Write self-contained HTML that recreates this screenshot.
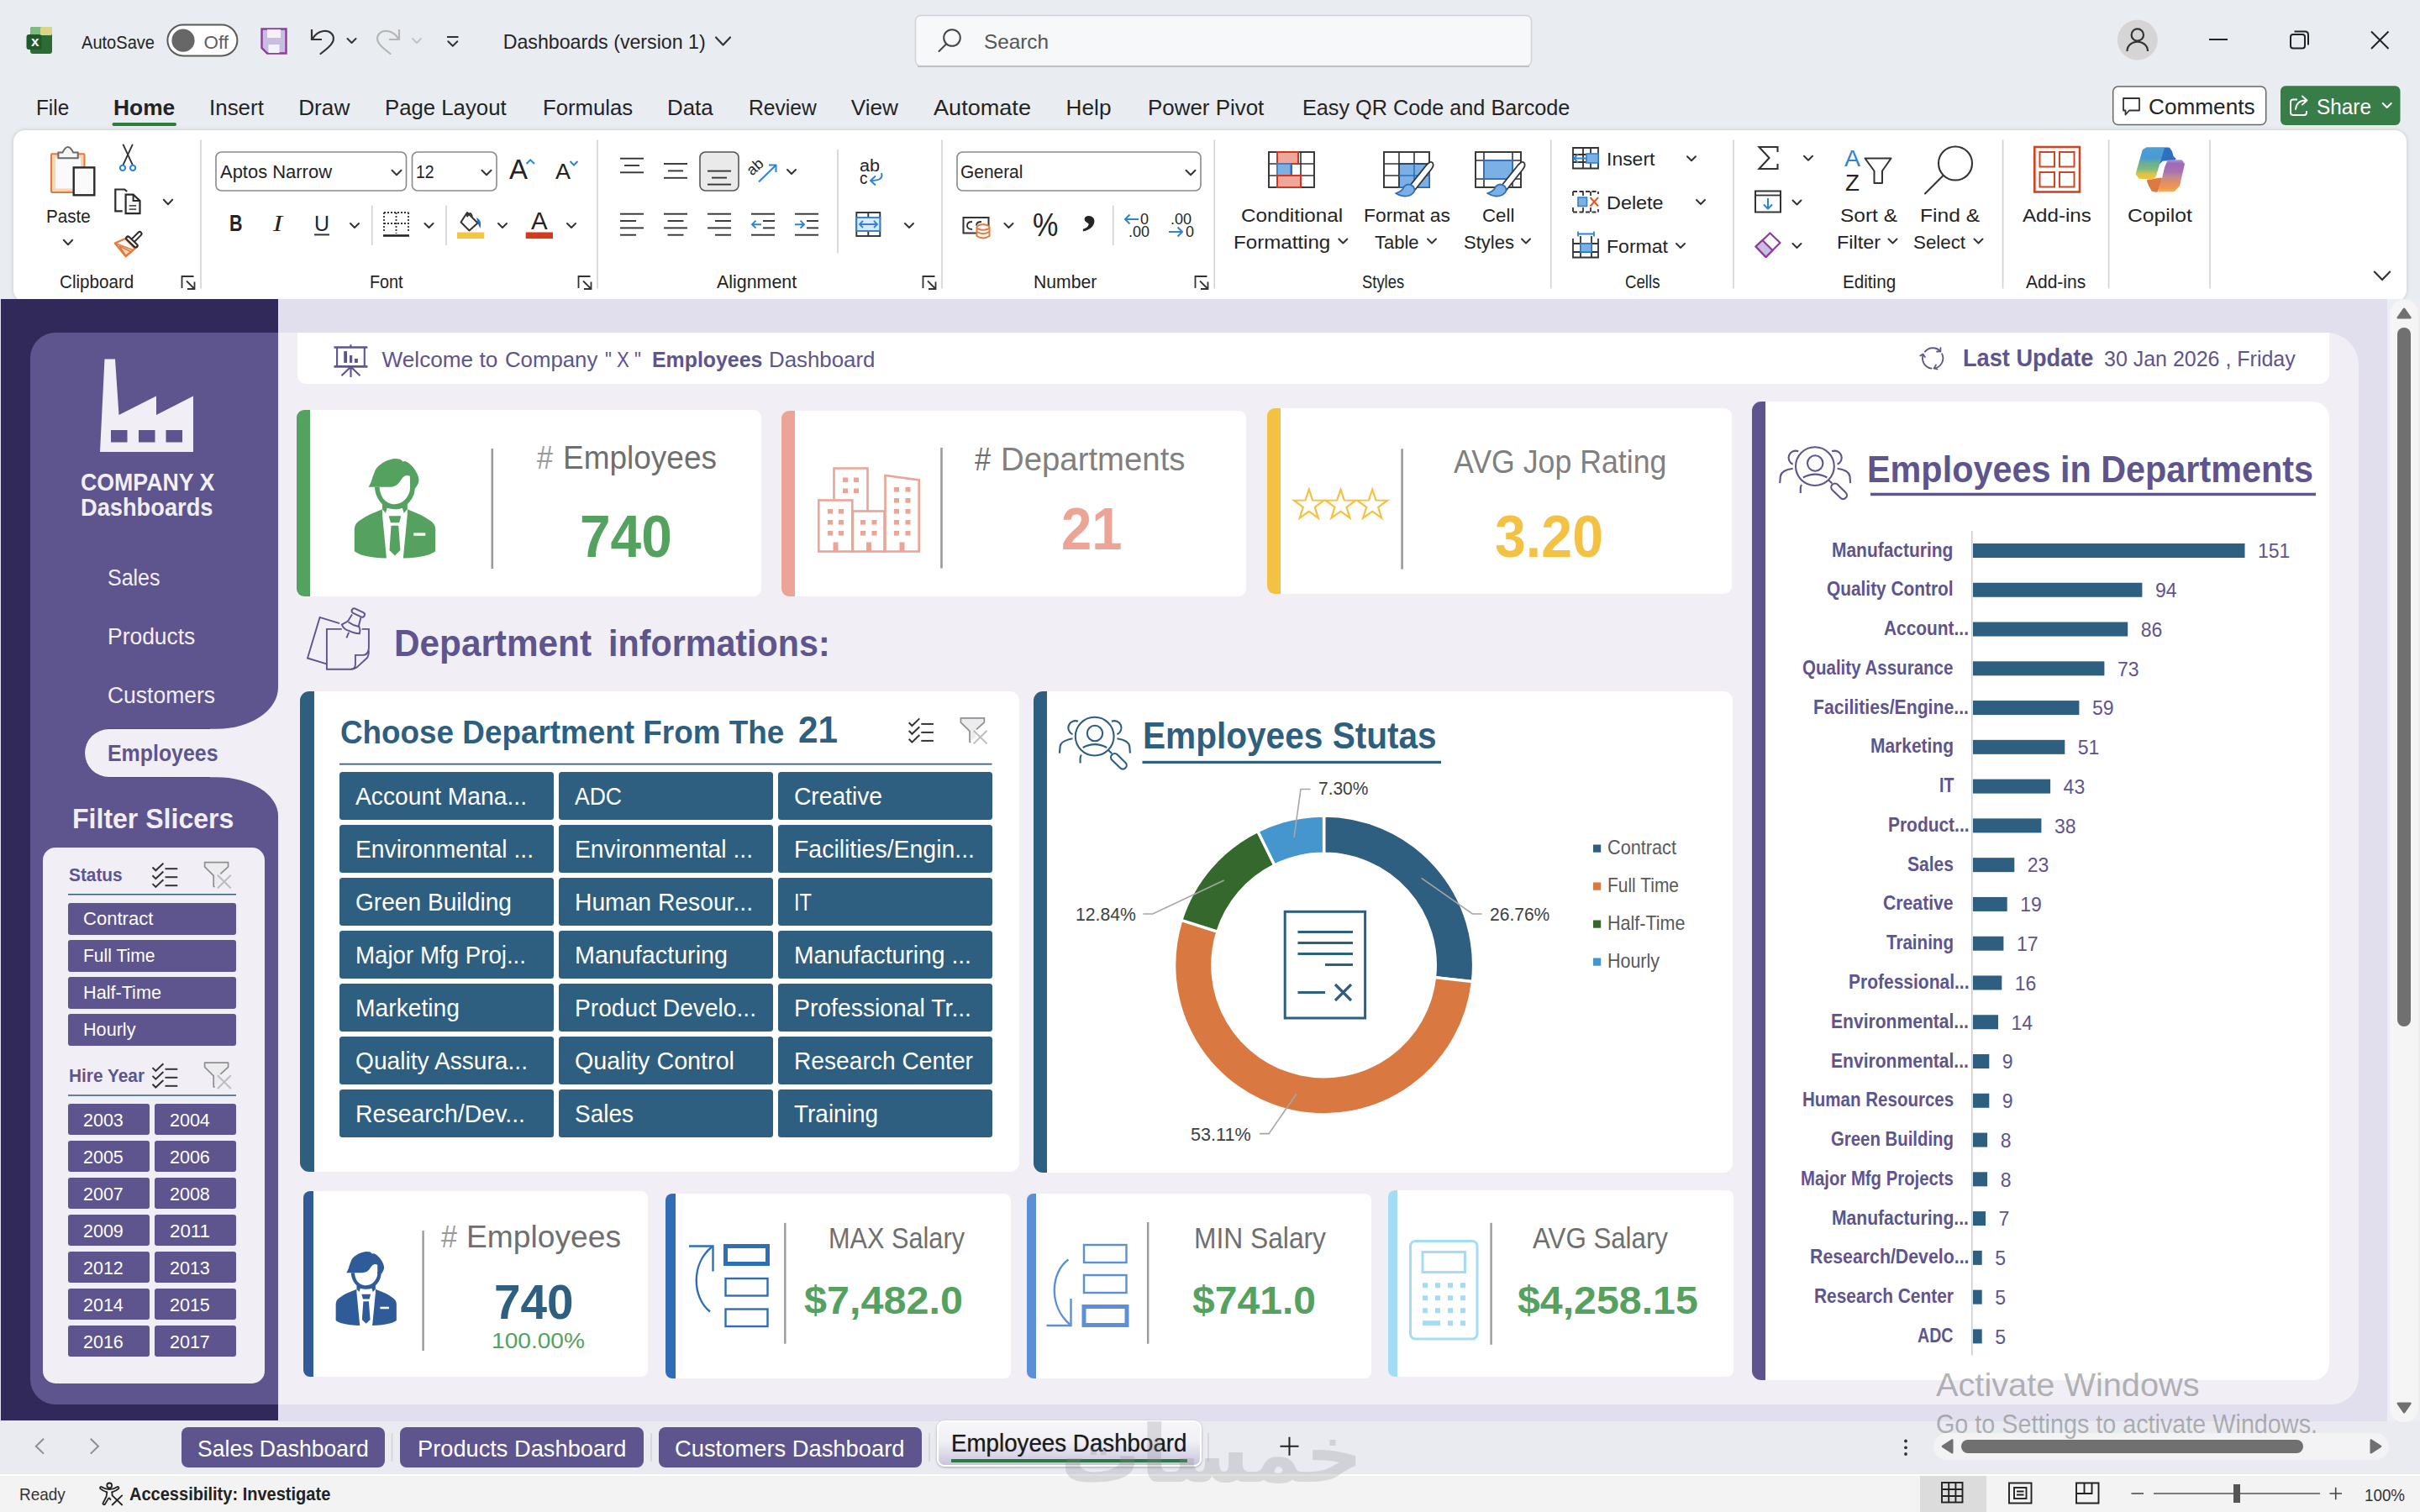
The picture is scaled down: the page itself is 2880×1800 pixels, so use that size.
<!DOCTYPE html>
<html lang="en"><head><meta charset="utf-8"><title>Dashboards (version 1) - Excel</title>
<style>
html,body{margin:0;padding:0}
body{width:2880px;height:1800px;overflow:hidden;position:relative;background:#E9EDF2;
font-family:"Liberation Sans",sans-serif;}
.t{position:absolute;white-space:nowrap;line-height:1;transform-origin:0 0;margin:0;padding:0}
.b{position:absolute;box-sizing:border-box}
.s{position:absolute;left:0;top:0;overflow:visible;pointer-events:none}
</style></head><body>
<svg class="s" width="2880" height="1800" viewBox="0 0 2880 1800" style=""><rect x="36" y="32" width="26" height="32" rx="3" fill="#2E6B34"/><rect x="36" y="32" width="26" height="10" rx="3" fill="#7DBB80"/><rect x="48" y="32" width="14" height="10" rx="2" fill="#D9D58A"/><rect x="31.5" y="41" width="18" height="18" rx="3" fill="#1E5A2B"/><rect x="199.4" y="29.5" width="83" height="37" rx="18.5" fill="#fff" stroke="#5A5A5A" stroke-width="2"/><circle cx="218" cy="48.2" r="13.6" fill="#676767"/><path d="M311.5,34.5 H340.5 V63.5 H318 L311.5,57 Z" fill="#C9BEDF" stroke="#8D3C9C" stroke-width="2.4"/><rect x="318" y="35" width="16" height="10" fill="#F4F1F8"/><rect x="319.5" y="53" width="13" height="10" fill="#F4F1F8"/><path d="M371,35 V47 H383" fill="none" stroke="#333" stroke-width="2.2" stroke-linejoin="miter"/><path d="M372,46 C378,36 392,33 396.5,43 C399,50 392,56 381.5,64" fill="none" stroke="#333" stroke-width="2.2" stroke-linecap="round"/><path d="M413.5,46.0 L418.5,51.0 L423.5,46.0" fill="none" stroke="#333" stroke-width="2" stroke-linecap="round" stroke-linejoin="round"/><path d="M475,35 V47 H463" fill="none" stroke="#B5B5B5" stroke-width="2.2"/><path d="M474,46 C468,36 454,33 449.5,43 C447,50 454,56 464.5,64" fill="none" stroke="#B5B5B5" stroke-width="2.2" stroke-linecap="round"/><path d="M491.0,46.0 L496.0,51.0 L501.0,46.0" fill="none" stroke="#C2C2C2" stroke-width="2" stroke-linecap="round" stroke-linejoin="round"/><path d="M532,44 H545.5" stroke="#333" stroke-width="2"/><path d="M533.3,49.2 L538.8,54.8 L544.3,49.2" fill="none" stroke="#333" stroke-width="2" stroke-linecap="round" stroke-linejoin="round"/><path d="M852.0,44.5 L860.5,53.5 L869.0,44.5" fill="none" stroke="#333" stroke-width="2.2" stroke-linecap="round" stroke-linejoin="round"/><rect x="1089.5" y="18.5" width="733" height="60" rx="6" fill="#F6F8FA" stroke="#CFD2D6" stroke-width="1.5"/><path d="M1092,79.2 H1820" stroke="#B9BCC0" stroke-width="1.6"/><circle cx="1133" cy="45" r="9.8" fill="none" stroke="#444" stroke-width="2"/><path d="M1126,52.5 L1117.5,61" stroke="#444" stroke-width="2" stroke-linecap="round"/><circle cx="2543.8" cy="47.6" r="24" fill="#D5D5D5"/><circle cx="2543.8" cy="41.5" r="7.2" fill="none" stroke="#333" stroke-width="2.2"/><path d="M2531.5,61 C2531.5,46 2556,46 2556,61" fill="none" stroke="#333" stroke-width="2.2"/><path d="M2629,47 H2651" stroke="#222" stroke-width="2"/><rect x="2726" y="41" width="17" height="16.5" rx="3" fill="none" stroke="#222" stroke-width="2"/><path d="M2730.5,37.5 H2743 Q2747,37.5 2747,41.5 V53.5" fill="none" stroke="#222" stroke-width="2"/><path d="M2822,37.5 L2842.5,58 M2842.5,37.5 L2822,58" stroke="#222" stroke-width="2"/><rect x="133.5" y="146" width="76.5" height="4" rx="2" fill="#2B7A3E"/><rect x="2514.7" y="103" width="182" height="45.5" rx="6" fill="#fff" stroke="#666" stroke-width="1.5"/><path d="M2527,117 H2546 V131.5 H2534 L2529.5,136.5 V131.5 H2527 Z" fill="none" stroke="#333" stroke-width="1.8" stroke-linejoin="round"/><rect x="2714" y="102.3" width="142.5" height="46.8" rx="6" fill="#387C48"/><path d="M2734,118.5 H2729 Q2726,118.5 2726,121.5 V134 Q2726,137 2729,137 H2742 Q2745,137 2745,134 V132" fill="none" stroke="#fff" stroke-width="1.9"/><path d="M2732,130 C2733,122 2738,119.5 2744,119.5 M2740,114.5 L2745.5,119.5 L2740,124.5" fill="none" stroke="#fff" stroke-width="1.9" stroke-linejoin="round" stroke-linecap="round"/><path d="M2835.7,123.0 L2840.7,128.0 L2845.7,123.0" fill="none" stroke="#fff" stroke-width="2" stroke-linecap="round" stroke-linejoin="round"/></svg>
<div class="t" style="left:37.20px;top:41.00px;font-size:17.00px;color:#fff;font-weight:700;transform:scaleX(1.0048);">x</div>
<div class="t" style="left:96.70px;top:40.00px;font-size:22.40px;color:#242424;transform:scaleX(0.8956);">AutoSave</div>
<div class="t" style="left:242.50px;top:40.00px;font-size:22.40px;color:#5F5F5F;">Off</div>
<div class="t" style="left:598.70px;top:39.00px;font-size:23.20px;color:#242424;">Dashboards (version 1)</div>
<div class="t" style="left:1171.00px;top:38.00px;font-size:24.00px;color:#555;transform:scaleX(1.0125);">Search</div>
<div class="t" style="left:42.80px;top:115.00px;font-size:26.20px;color:#242424;transform:scaleX(0.9285);">File</div>
<div class="t" style="left:135.00px;top:115.00px;font-size:26.20px;color:#242424;font-weight:700;transform:scaleX(1.0070);">Home</div>
<div class="t" style="left:248.70px;top:115.00px;font-size:26.20px;color:#242424;transform:scaleX(0.9904);">Insert</div>
<div class="t" style="left:355.20px;top:115.00px;font-size:26.20px;color:#242424;">Draw</div>
<div class="t" style="left:458.00px;top:115.00px;font-size:26.20px;color:#242424;transform:scaleX(0.9834);">Page Layout</div>
<div class="t" style="left:645.60px;top:115.00px;font-size:26.20px;color:#242424;transform:scaleX(0.9808);">Formulas</div>
<div class="t" style="left:794.30px;top:115.00px;font-size:26.20px;color:#242424;transform:scaleX(0.9884);">Data</div>
<div class="t" style="left:890.70px;top:115.00px;font-size:26.20px;color:#242424;transform:scaleX(0.9417);">Review</div>
<div class="t" style="left:1012.70px;top:115.00px;font-size:26.20px;color:#242424;">View</div>
<div class="t" style="left:1111.00px;top:115.00px;font-size:26.20px;color:#242424;transform:scaleX(1.0344);">Automate</div>
<div class="t" style="left:1268.60px;top:115.00px;font-size:26.20px;color:#242424;">Help</div>
<div class="t" style="left:1365.60px;top:115.00px;font-size:26.20px;color:#242424;transform:scaleX(0.9900);">Power Pivot</div>
<div class="t" style="left:1550.00px;top:115.00px;font-size:26.20px;color:#242424;transform:scaleX(0.9634);">Easy QR Code and Barcode</div>
<div class="t" style="left:2557.00px;top:114.00px;font-size:26.20px;color:#242424;">Comments</div>
<div class="t" style="left:2756.80px;top:114.00px;font-size:26.20px;color:#fff;transform:scaleX(0.9297);">Share</div>
<div class="b" style="left:15.80px;top:155.30px;width:2848.20px;height:203.50px;background:#fff;border-radius:14px;box-shadow:0 0 5px rgba(0,0,0,.16);"></div>
<svg class="s" width="2880" height="1800" viewBox="0 0 2880 1800" style=""><path d="M239,166.5 V343.5" stroke="#D2D2D2" stroke-width="1.6"/><path d="M711,166.5 V343.5" stroke="#D2D2D2" stroke-width="1.6"/><path d="M1121,166.5 V343.5" stroke="#D2D2D2" stroke-width="1.6"/><path d="M1445.3,166.5 V343.5" stroke="#D2D2D2" stroke-width="1.6"/><path d="M1845.7,166.5 V343.5" stroke="#D2D2D2" stroke-width="1.6"/><path d="M2063,166.5 V343.5" stroke="#D2D2D2" stroke-width="1.6"/><path d="M2383.6,166.5 V343.5" stroke="#D2D2D2" stroke-width="1.6"/><path d="M2509.6,166.5 V343.5" stroke="#D2D2D2" stroke-width="1.6"/><path d="M2630,166.5 V343.5" stroke="#D2D2D2" stroke-width="1.6"/><path d="M997,178 V301.5" stroke="#D2D2D2" stroke-width="1.6"/><path d="M442.7,244.6 V292" stroke="#D2D2D2" stroke-width="1.6"/><path d="M531,244.6 V292" stroke="#D2D2D2" stroke-width="1.6"/><path d="M1324.8,244.6 V292" stroke="#D2D2D2" stroke-width="1.6"/><path d="M216.5,343 V329 H230.5" fill="none" stroke="#333" stroke-width="1.8"/><path d="M222.0,334.5 L231.5,344 M231.5,335.5 V344 H223.0" fill="none" stroke="#333" stroke-width="1.8"/><path d="M688.5,343 V329 H702.5" fill="none" stroke="#333" stroke-width="1.8"/><path d="M694.0,334.5 L703.5,344 M703.5,335.5 V344 H695.0" fill="none" stroke="#333" stroke-width="1.8"/><path d="M1098.5,343 V329 H1112.5" fill="none" stroke="#333" stroke-width="1.8"/><path d="M1104.0,334.5 L1113.5,344 M1113.5,335.5 V344 H1105.0" fill="none" stroke="#333" stroke-width="1.8"/><path d="M1422.5,343 V329 H1436.5" fill="none" stroke="#333" stroke-width="1.8"/><path d="M1428.0,334.5 L1437.5,344 M1437.5,335.5 V344 H1429.0" fill="none" stroke="#333" stroke-width="1.8"/><rect x="61" y="183.2" width="39.5" height="45.8" rx="1" fill="#F8D3B3" stroke="#E07B3E" stroke-width="2"/><rect x="65.9" y="187.8" width="30.2" height="36.7" fill="#FAFAFA"/><path d="M69.4,188.3 V181.4 H74.5 Q80.8,168.5 87.1,181.4 H92.7 V188.3 Z" fill="#F7F7F7" stroke="#6A6A6A" stroke-width="2"/><rect x="87.7" y="199.4" width="24.6" height="32.9" fill="#FAFAFA" stroke="#2B2B2B" stroke-width="2.4"/><path d="M75.8,285.8 L81.0,291.2 L86.2,285.8" fill="none" stroke="#333" stroke-width="2" stroke-linecap="round" stroke-linejoin="round"/><path d="M146.7,172.4 L157.6,195.8 M157.6,172.4 L146.7,195.8" stroke="#333" stroke-width="1.9" stroke-linecap="round"/><circle cx="146" cy="199.9" r="3.1" fill="#fff" stroke="#2F83D0" stroke-width="2.1"/><circle cx="158.1" cy="199.9" r="3.1" fill="#fff" stroke="#2F83D0" stroke-width="2.1"/><path d="M145.7,251.3 H137.3 V225.5 H148.2 L151.2,228" fill="none" stroke="#2B2B2B" stroke-width="2.2"/><path d="M149.6,231.6 H158.6 L166.5,238.9 V254.2 H149.6 Z" fill="#FAFAFA" stroke="#2B2B2B" stroke-width="2.2" stroke-linejoin="miter"/><path d="M158.6,231.6 V238.9 H166.5" fill="none" stroke="#2B2B2B" stroke-width="2"/><path d="M153.7,244.9 H162.1 M153.7,249.1 H162.1" stroke="#555" stroke-width="1.6"/><path d="M194.8,237.8 L200.0,243.2 L205.2,237.8" fill="none" stroke="#333" stroke-width="2" stroke-linecap="round" stroke-linejoin="round"/><path d="M149.2,284 L136.8,289.5 L149.7,305.4 L160.6,296 Z" fill="#FAFAFA" stroke="#E07B3E" stroke-width="2.2" stroke-linejoin="round"/><path d="M142,293 L149.7,304.4 L156,299.5 Z" fill="#F8D3B3" stroke="#E07B3E" stroke-width="1.6" stroke-linejoin="round"/><path d="M138,290 L158,297.5" stroke="#E07B3E" stroke-width="1.6"/><path d="M166.2,278.3 L158.6,286" stroke="#2B2B2B" stroke-width="6.6" stroke-linecap="round"/><path d="M166.2,278.3 L158.6,286" stroke="#FAFAFA" stroke-width="2.6" stroke-linecap="round"/><path d="M152.2,283.6 L161.6,292.5" stroke="#2B2B2B" stroke-width="6.2" stroke-linecap="round"/><path d="M152.4,283.8 L161.4,292.3" stroke="#FAFAFA" stroke-width="2.2" stroke-linecap="round"/><rect x="257" y="181" width="226.5" height="46" rx="6.5" fill="#fff" stroke="#8A8A8A" stroke-width="1.6"/><rect x="490.5" y="181" width="100.5" height="46" rx="6.5" fill="#fff" stroke="#8A8A8A" stroke-width="1.6"/><path d="M466.5,202.8 L472.0,208.2 L477.5,202.8" fill="none" stroke="#333" stroke-width="2" stroke-linecap="round" stroke-linejoin="round"/><path d="M573.5,202.8 L579.0,208.2 L584.5,202.8" fill="none" stroke="#333" stroke-width="2" stroke-linecap="round" stroke-linejoin="round"/><path d="M626.5,195 L631.2,190.3 L636,195" fill="none" stroke="#2F83D0" stroke-width="2"/><path d="M678.5,192 L683,196.5 L687.5,192" fill="none" stroke="#2F83D0" stroke-width="2"/><path d="M374,279.4 H392" stroke="#333" stroke-width="2"/><path d="M417.0,266.0 L422.0,271.0 L427.0,266.0" fill="none" stroke="#333" stroke-width="2" stroke-linecap="round" stroke-linejoin="round"/><path d="M505.5,266.0 L510.5,271.0 L515.5,266.0" fill="none" stroke="#333" stroke-width="2" stroke-linecap="round" stroke-linejoin="round"/><path d="M593.0,266.0 L598.0,271.0 L603.0,266.0" fill="none" stroke="#333" stroke-width="2" stroke-linecap="round" stroke-linejoin="round"/><path d="M675.0,266.0 L680.0,271.0 L685.0,266.0" fill="none" stroke="#333" stroke-width="2" stroke-linecap="round" stroke-linejoin="round"/><path d="M457,253 H486 M457,253 V276 M486,253 V276 M471.5,253 V278 M457,266 H486" stroke="#333" stroke-width="1.8" stroke-dasharray="2 2"/><path d="M456,280.5 H487" stroke="#222" stroke-width="2.6"/><path d="M556,253 L568.5,265.5 L558.5,274.5 L548.5,264.5 Z" fill="#fff" stroke="#333" stroke-width="2" stroke-linejoin="round"/><path d="M556,253 V258 Q560,250 562,258" fill="none" stroke="#333" stroke-width="1.8"/><path d="M567,259 Q574,262 571.5,272 Q568,266 567,259 Z" fill="#1F6FC0"/><rect x="544" y="276.5" width="32.3" height="7.6" fill="#F3C73F"/><rect x="625.7" y="276.5" width="32.3" height="7.6" fill="#D43A1E"/><path d="M738.0,188.7 H766.0" stroke="#333" stroke-width="1.9"/><path d="M743.0,197 H761.0" stroke="#333" stroke-width="1.9"/><path d="M738.0,205.3 H766.0" stroke="#333" stroke-width="1.9"/><path d="M790.0,195 H818.0" stroke="#333" stroke-width="1.9"/><path d="M795.0,203.4 H813.0" stroke="#333" stroke-width="1.9"/><path d="M790.0,211.8 H818.0" stroke="#333" stroke-width="1.9"/><rect x="833" y="181" width="46" height="46" rx="6.5" fill="#EAEAEA" stroke="#555" stroke-width="1.6"/><path d="M842.0,203.6 H870.0" stroke="#333" stroke-width="1.9"/><path d="M847.0,211.6 H865.0" stroke="#333" stroke-width="1.9"/><path d="M842.0,219.6 H870.0" stroke="#333" stroke-width="1.9"/><path d="M903,216.5 L923,197 M915,196.5 H923.5 V205" fill="none" stroke="#2F83D0" stroke-width="2" stroke-linejoin="round"/><path d="M937.0,202.0 L942.0,207.0 L947.0,202.0" fill="none" stroke="#333" stroke-width="2" stroke-linecap="round" stroke-linejoin="round"/><path d="M1049,206 Q1052,215 1037,215 M1042,209.5 L1036,215 L1042,220.5" fill="none" stroke="#2F83D0" stroke-width="2" stroke-linejoin="round"/><path d="M738.0,254.7 H766.0" stroke="#333" stroke-width="1.9"/><path d="M738.0,263 H757.0" stroke="#333" stroke-width="1.9"/><path d="M738.0,271.4 H766.0" stroke="#333" stroke-width="1.9"/><path d="M738.0,279.7 H757.0" stroke="#333" stroke-width="1.9"/><path d="M790.0,254.7 H818.0" stroke="#333" stroke-width="1.9"/><path d="M794.5,263 H813.5" stroke="#333" stroke-width="1.9"/><path d="M790.0,271.4 H818.0" stroke="#333" stroke-width="1.9"/><path d="M794.5,279.7 H813.5" stroke="#333" stroke-width="1.9"/><path d="M842.0,254.7 H870.0" stroke="#333" stroke-width="1.9"/><path d="M851.0,263 H870.0" stroke="#333" stroke-width="1.9"/><path d="M842.0,271.4 H870.0" stroke="#333" stroke-width="1.9"/><path d="M851.0,279.7 H870.0" stroke="#333" stroke-width="1.9"/><path d="M894.0,254.7 H922.0" stroke="#333" stroke-width="1.9"/><path d="M894.0,279.7 H922.0" stroke="#333" stroke-width="1.9"/><path d="M908.0,263 H922.0" stroke="#333" stroke-width="1.9"/><path d="M908.0,271.4 H922.0" stroke="#333" stroke-width="1.9"/><path d="M906,267.2 H895 M899.5,262.7 L895,267.2 L899.5,271.7" fill="none" stroke="#2F83D0" stroke-width="1.9"/><path d="M946.0,254.7 H974.0" stroke="#333" stroke-width="1.9"/><path d="M946.0,279.7 H974.0" stroke="#333" stroke-width="1.9"/><path d="M960.0,263 H974.0" stroke="#333" stroke-width="1.9"/><path d="M960.0,271.4 H974.0" stroke="#333" stroke-width="1.9"/><path d="M946,267.2 H957 M952.5,262.7 L957,267.2 L952.5,271.7" fill="none" stroke="#2F83D0" stroke-width="1.9"/><rect x="1019.3" y="253" width="28" height="28" fill="#fff" stroke="#333" stroke-width="1.9"/><path d="M1033.3,253 V259 M1033.3,275 V281" stroke="#333" stroke-width="1.9"/><rect x="1019.3" y="259" width="28" height="16" fill="#D9E9F8" stroke="#2F83D0" stroke-width="1.9"/><path d="M1023,267 H1044 M1027,263 L1023,267 L1027,271 M1040,263 L1044,267 L1040,271" fill="none" stroke="#2F83D0" stroke-width="1.8"/><path d="M1077.0,266.0 L1082.0,271.0 L1087.0,266.0" fill="none" stroke="#333" stroke-width="2" stroke-linecap="round" stroke-linejoin="round"/><rect x="1139" y="181" width="290" height="46" rx="6.5" fill="#fff" stroke="#8A8A8A" stroke-width="1.6"/><path d="M1411.5,202.8 L1417.0,208.2 L1422.5,202.8" fill="none" stroke="#333" stroke-width="2" stroke-linecap="round" stroke-linejoin="round"/><rect x="1146.5" y="259" width="30" height="18.5" fill="#fff" stroke="#333" stroke-width="2"/><path d="M1157,264 Q1151,264 1151,268.5 Q1151,273 1157,273 M1168,264 Q1162,264 1162,268.5" fill="none" stroke="#333" stroke-width="1.8"/><path d="M1162.5,270.5 V281 Q1170,286 1177.5,281 V270.5" fill="#fff" stroke="#E07B3E" stroke-width="2"/><ellipse cx="1170" cy="270.5" rx="7.5" ry="3.2" fill="#fff" stroke="#E07B3E" stroke-width="2"/><path d="M1162.5,276 Q1170,280.5 1177.5,276" fill="none" stroke="#E07B3E" stroke-width="1.8"/><path d="M1195.5,266.0 L1200.5,271.0 L1205.5,266.0" fill="none" stroke="#333" stroke-width="2" stroke-linecap="round" stroke-linejoin="round"/><path d="M1355,261 H1339 M1344.5,255.5 L1339,261 L1344.5,266.5" fill="none" stroke="#2F83D0" stroke-width="2"/><path d="M1391,276 H1407 M1401.5,270.5 L1407,276 L1401.5,281.5" fill="none" stroke="#2F83D0" stroke-width="2"/><rect x="1510" y="181" width="54" height="42" fill="#fff" stroke="#333" stroke-width="1.9"/><path d="M1510,195 H1564 M1510,209 H1564 M1520,181 V223 M1537,181 V223 M1548,181 V223" stroke="#333" stroke-width="1.6"/><rect x="1520" y="181" width="25" height="14" fill="#F0A79B" stroke="#D3361E" stroke-width="2"/><rect x="1520" y="195" width="16" height="14" fill="#7CB0E4" stroke="#2F83D0" stroke-width="1.6"/><rect x="1520" y="209" width="28" height="14" fill="#F0A79B" stroke="#D3361E" stroke-width="2"/><path d="M1593.3,284.5 L1598.3,289.5 L1603.3,284.5" fill="none" stroke="#333" stroke-width="2" stroke-linecap="round" stroke-linejoin="round"/><rect x="1647" y="181" width="54" height="42" fill="#fff" stroke="#333" stroke-width="1.9"/><rect x="1665" y="195" width="36" height="28" fill="#7CB0E4" stroke="#2F6FBF" stroke-width="1.6"/><path d="M1647,195 H1701 M1647,209 H1665 M1665,181 V223 M1683,181 V195" stroke="#333" stroke-width="1.6"/><path d="M1665,209 H1701 M1683,195 V223" stroke="#2F6FBF" stroke-width="1.6"/><g transform="translate(1647,181)"><path d="M31,40 L51,15 Q56,10 58,13 Q60,16 56,21 L37,45 Z" fill="#fff" stroke="#333" stroke-width="1.8" stroke-linejoin="round"/><path d="M14,49 Q22,47 24,41 Q29,36 35,41 Q39,47 32,51 Q24,55 14,49 Z" fill="#7CB0E4" stroke="#2F6FBF" stroke-width="1.8" stroke-linejoin="round"/></g><path d="M1699.0,284.5 L1704.0,289.5 L1709.0,284.5" fill="none" stroke="#333" stroke-width="2" stroke-linecap="round" stroke-linejoin="round"/><rect x="1756" y="181" width="54" height="42" fill="#fff" stroke="#333" stroke-width="1.9"/><path d="M1756,191 H1810 M1756,213 H1810 M1766,181 V223 M1800,181 V223" stroke="#333" stroke-width="1.6"/><rect x="1766" y="191" width="34" height="22" fill="#7CB0E4" stroke="#2F6FBF" stroke-width="1.8"/><g transform="translate(1756,181)"><path d="M31,40 L51,15 Q56,10 58,13 Q60,16 56,21 L37,45 Z" fill="#fff" stroke="#333" stroke-width="1.8" stroke-linejoin="round"/><path d="M14,49 Q22,47 24,41 Q29,36 35,41 Q39,47 32,51 Q24,55 14,49 Z" fill="#7CB0E4" stroke="#2F6FBF" stroke-width="1.8" stroke-linejoin="round"/></g><path d="M1811.0,284.5 L1816.0,289.5 L1821.0,284.5" fill="none" stroke="#333" stroke-width="2" stroke-linecap="round" stroke-linejoin="round"/><path d="M1872,176 H1902 V200.5 H1872 Z M1872,184 H1902 M1872,193 H1902 M1884,176 V200.5 M1893,176 V200.5" fill="none" stroke="#333" stroke-width="1.8"/><rect x="1888" y="183" width="14" height="11" fill="#7CB0E4" stroke="#2F83D0" stroke-width="1.6"/><path d="M1888,188.5 H1873 M1878,183.5 L1873,188.5 L1878,193.5" fill="none" stroke="#2F83D0" stroke-width="2"/><path d="M2008.0,186.2 L2013.0,191.2 L2018.0,186.2" fill="none" stroke="#333" stroke-width="2" stroke-linecap="round" stroke-linejoin="round"/><path d="M1872,228 H1902 M1872,252.5 H1902 M1872,228 V233 M1872,247 V252.5 M1902,228 V231 M1902,249 V252.5 M1884,228 V233 M1884,247 V252.5 M1893,228 V233 M1893,247 V252.5" fill="none" stroke="#333" stroke-width="1.8" stroke-dasharray="5 2.5"/><rect x="1878" y="235" width="10.5" height="10.5" fill="#7CB0E4" stroke="#2F83D0" stroke-width="1.6"/><path d="M1892.5,235 L1902,245.5 M1902,235 L1892.5,245.5" stroke="#E0572B" stroke-width="2"/><path d="M2019.0,238.0 L2024.0,243.0 L2029.0,238.0" fill="none" stroke="#333" stroke-width="2" stroke-linecap="round" stroke-linejoin="round"/><path d="M1872,284 V306.5 H1902 V284 M1872,290 H1902 M1872,300 H1902 M1881,281 V306.5 M1894,281 V306.5" fill="none" stroke="#333" stroke-width="1.8"/><rect x="1881" y="290" width="13" height="10" fill="#7CB0E4" stroke="#2F83D0" stroke-width="1.6"/><path d="M1878,278.5 H1897 M1878,275.5 V281.5 M1897,275.5 V281.5" stroke="#2F83D0" stroke-width="1.8"/><path d="M1995.0,290.0 L2000.0,295.0 L2005.0,290.0" fill="none" stroke="#333" stroke-width="2" stroke-linecap="round" stroke-linejoin="round"/><path d="M2115.5,181 V175 H2093.5 L2105.5,188 L2093.5,201 H2115.5 V195" fill="none" stroke="#333" stroke-width="2.1" stroke-linejoin="miter"/><path d="M2147.0,185.7 L2152.0,190.7 L2157.0,185.7" fill="none" stroke="#333" stroke-width="2" stroke-linecap="round" stroke-linejoin="round"/><rect x="2089" y="227.5" width="30" height="25" fill="#fff" stroke="#333" stroke-width="2"/><path d="M2089,232.5 H2119" stroke="#333" stroke-width="1.8"/><path d="M2104,236 V248 M2099,243.5 L2104,248.5 L2109,243.5" fill="none" stroke="#2F83D0" stroke-width="2"/><path d="M2133.5,238.5 L2138.5,243.5 L2143.5,238.5" fill="none" stroke="#333" stroke-width="2" stroke-linecap="round" stroke-linejoin="round"/><path d="M2089.5,293.5 L2106.5,277.5 L2118.5,289 L2101.5,306 Z" fill="#fff" stroke="#8D3C9C" stroke-width="2.2" stroke-linejoin="round"/><path d="M2089.5,293.5 L2097.5,286 L2109.5,298 L2101.5,306 Z" fill="#C9BEDF" stroke="#8D3C9C" stroke-width="2.2" stroke-linejoin="round"/><path d="M2133.5,290.0 L2138.5,295.0 L2143.5,290.0" fill="none" stroke="#333" stroke-width="2" stroke-linecap="round" stroke-linejoin="round"/><path d="M2219.5,188.5 H2250.5 L2240,203.5 V218 H2230.5 V203.5 Z" fill="#fff" stroke="#333" stroke-width="2" stroke-linejoin="round"/><path d="M2247.5,284.5 L2252.5,289.5 L2257.5,284.5" fill="none" stroke="#333" stroke-width="2" stroke-linecap="round" stroke-linejoin="round"/><circle cx="2327" cy="194.5" r="20" fill="#fff" stroke="#333" stroke-width="2.1"/><path d="M2312.5,209 L2291,230.5" stroke="#333" stroke-width="2.1" stroke-linecap="round"/><path d="M2349.5,284.5 L2354.5,289.5 L2359.5,284.5" fill="none" stroke="#333" stroke-width="2" stroke-linecap="round" stroke-linejoin="round"/><rect x="2421.3" y="175" width="53.7" height="53.5" fill="#fff" stroke="#D04423" stroke-width="2.6"/><rect x="2427.5" y="181" width="17.5" height="17.5" fill="none" stroke="#D04423" stroke-width="2"/><rect x="2451" y="181" width="17.5" height="17.5" fill="none" stroke="#D04423" stroke-width="2"/><rect x="2427.5" y="205" width="17.5" height="17.5" fill="none" stroke="#D04423" stroke-width="2"/><rect x="2451" y="205" width="17.5" height="17.5" fill="none" stroke="#D04423" stroke-width="2"/><defs><linearGradient id="cp1" x1="0" y1="175" x2="0" y2="214" gradientUnits="userSpaceOnUse"><stop offset="0" stop-color="#4D9DD6"/><stop offset=".34" stop-color="#4A9AD4"/><stop offset=".5" stop-color="#6BAF8C"/><stop offset=".68" stop-color="#7DBB7E"/><stop offset=".82" stop-color="#DCC24A"/><stop offset="1" stop-color="#F9C33A"/></linearGradient><linearGradient id="cp2" x1="0" y1="190" x2="0" y2="229" gradientUnits="userSpaceOnUse"><stop offset="0" stop-color="#A99DCB"/><stop offset=".12" stop-color="#A069B8"/><stop offset=".38" stop-color="#A873B0"/><stop offset=".52" stop-color="#C08A90"/><stop offset=".7" stop-color="#E58D62"/><stop offset=".88" stop-color="#EE9A52"/><stop offset="1" stop-color="#F6BC45"/></linearGradient></defs><g stroke-linejoin="round" stroke-width="3"><path d="M2560.5,214.8 L2571.5,213 L2569.2,220 L2566.5,227.3 L2561.8,226.5 L2558,219.6 L2556.5,215.2 Z" fill="#DC7A44" stroke="#DC7A44"/><path d="M2574.8,177 L2581,177 L2583.5,180.5 L2585.3,186.8 L2588,189.3 L2573.2,190.3 L2569.7,193.8 L2572,184.8 Z" fill="#2F6FBF" stroke="#2F6FBF"/><path d="M2555,176.7 L2574.3,176.7 L2564.4,209.3 L2561.4,212.2 L2546.2,211.2 L2543.2,207 L2551,179.3 Z" fill="url(#cp1)" stroke="url(#cp1)"/><path d="M2580.6,192.1 L2595.8,191.7 L2598.4,195.3 L2592.6,220.6 L2586.8,226.8 L2569.6,227.1 L2574,214.6 L2577.4,199.9 Z" fill="url(#cp2)" stroke="url(#cp2)"/></g><path d="M2825.8,323.6 L2835.0,333.1 L2844.2,323.6" fill="none" stroke="#333" stroke-width="2.2" stroke-linecap="round" stroke-linejoin="round"/></svg>
<div class="t" style="left:55.00px;top:247.00px;font-size:22.50px;color:#242424;transform:scaleX(0.9159);">Paste</div>
<div class="t" style="left:71.40px;top:325.00px;font-size:21.20px;color:#242424;transform:scaleX(0.9741);">Clipboard</div>
<div class="t" style="left:261.80px;top:194.00px;font-size:22.50px;color:#242424;transform:scaleX(0.9758);">Aptos Narrow</div>
<div class="t" style="left:495.40px;top:194.00px;font-size:22.50px;color:#242424;transform:scaleX(0.8630);">12</div>
<div class="t" style="left:606.00px;top:184.00px;font-size:34.00px;color:#242424;transform:scaleX(0.9701);">A</div>
<div class="t" style="left:661.00px;top:191.00px;font-size:26.00px;color:#242424;transform:scaleX(1.0379);">A</div>
<div class="t" style="left:273.00px;top:253.00px;font-size:27.00px;color:#242424;font-weight:700;transform:scaleX(0.7949);">B</div>
<div class="t" style="left:325.00px;top:252.00px;font-size:28.00px;color:#242424;font-style:italic;font-family:'Liberation Serif',serif;transform:scaleX(1.1796);">I</div>
<div class="t" style="left:374.00px;top:253.00px;font-size:26.50px;color:#242424;transform:scaleX(0.9405);">U</div>
<div class="t" style="left:632.00px;top:249.00px;font-size:29.00px;color:#242424;transform:scaleX(1.0132);">A</div>
<div class="t" style="left:440.00px;top:325.00px;font-size:21.20px;color:#242424;transform:scaleX(0.9335);">Font</div>
<div class="t" style="left:897.00px;top:194.00px;font-size:18.00px;color:#242424;transform:scaleX(0.8491);transform-origin:0 100%;transform:rotate(-42deg);">ab</div>
<div class="t" style="left:1023.00px;top:188.00px;font-size:19.50px;color:#242424;transform:scaleX(1.1065);">ab</div>
<div class="t" style="left:1023.00px;top:203.00px;font-size:19.50px;color:#242424;transform:scaleX(0.9744);">c</div>
<div class="t" style="left:852.60px;top:325.00px;font-size:21.20px;color:#242424;transform:scaleX(1.0098);">Alignment</div>
<div class="t" style="left:1143.30px;top:194.00px;font-size:22.50px;color:#242424;transform:scaleX(0.9294);">General</div>
<div class="t" style="left:1229.00px;top:249.00px;font-size:38.50px;color:#242424;transform:scaleX(0.8881);">%</div>
<div class="t" style="left:1288.00px;top:214.00px;font-size:62.00px;color:#242424;font-weight:700;font-family:'Liberation Serif',serif;transform:scaleX(1.0968);">,</div>
<div class="t" style="left:1357.00px;top:253.00px;font-size:17.50px;color:#242424;transform:scaleX(1.0274);">0</div>
<div class="t" style="left:1343.00px;top:268.00px;font-size:17.50px;color:#242424;transform:scaleX(1.0276);">.00</div>
<div class="t" style="left:1393.00px;top:253.00px;font-size:17.50px;color:#242424;transform:scaleX(1.0276);">.00</div>
<div class="t" style="left:1411.00px;top:268.00px;font-size:17.50px;color:#242424;transform:scaleX(1.0274);">0</div>
<div class="t" style="left:1230.00px;top:325.00px;font-size:21.20px;color:#242424;">Number</div>
<div class="t" style="left:1476.80px;top:246.00px;font-size:22.50px;color:#242424;transform:scaleX(1.0757);">Conditional</div>
<div class="t" style="left:1467.80px;top:278.00px;font-size:22.50px;color:#242424;transform:scaleX(1.0713);">Formatting</div>
<div class="t" style="left:1623.00px;top:246.00px;font-size:22.50px;color:#242424;transform:scaleX(1.0151);">Format as</div>
<div class="t" style="left:1636.00px;top:278.00px;font-size:22.50px;color:#242424;transform:scaleX(0.9779);">Table</div>
<div class="t" style="left:1763.60px;top:246.00px;font-size:22.50px;color:#242424;transform:scaleX(0.9907);">Cell</div>
<div class="t" style="left:1741.60px;top:278.00px;font-size:22.50px;color:#242424;transform:scaleX(0.9792);">Styles</div>
<div class="t" style="left:1620.80px;top:325.00px;font-size:21.20px;color:#242424;transform:scaleX(0.8695);">Styles</div>
<div class="t" style="left:1912.40px;top:179.00px;font-size:22.50px;color:#242424;transform:scaleX(1.0200);">Insert</div>
<div class="t" style="left:1912.40px;top:231.00px;font-size:22.50px;color:#242424;transform:scaleX(1.0393);">Delete</div>
<div class="t" style="left:1912.40px;top:283.00px;font-size:22.50px;color:#242424;transform:scaleX(1.0244);">Format</div>
<div class="t" style="left:1933.50px;top:325.00px;font-size:21.20px;color:#242424;transform:scaleX(0.8807);">Cells</div>
<div class="t" style="left:2195.00px;top:175.00px;font-size:28.00px;color:#2F83D0;transform:scaleX(1.0173);">A</div>
<div class="t" style="left:2195.50px;top:204.00px;font-size:28.00px;color:#242424;transform:scaleX(0.9939);">Z</div>
<div class="t" style="left:2190.00px;top:246.00px;font-size:22.50px;color:#242424;transform:scaleX(1.0876);">Sort &amp;</div>
<div class="t" style="left:2185.80px;top:278.00px;font-size:22.50px;color:#242424;transform:scaleX(1.0400);">Filter</div>
<div class="t" style="left:2284.70px;top:246.00px;font-size:22.50px;color:#242424;transform:scaleX(1.0949);">Find &amp;</div>
<div class="t" style="left:2277.00px;top:278.00px;font-size:22.50px;color:#242424;transform:scaleX(0.9914);">Select</div>
<div class="t" style="left:2192.70px;top:325.00px;font-size:21.20px;color:#242424;transform:scaleX(0.9749);">Editing</div>
<div class="t" style="left:2407.00px;top:246.00px;font-size:22.50px;color:#242424;transform:scaleX(1.0722);">Add-ins</div>
<div class="t" style="left:2411.40px;top:325.00px;font-size:21.20px;color:#242424;transform:scaleX(0.9905);">Add-ins</div>
<div class="t" style="left:2532.20px;top:246.00px;font-size:22.50px;color:#242424;transform:scaleX(1.0965);">Copilot</div>
<div class="b" style="left:0.00px;top:356.30px;width:2880.00px;height:1335.70px;background:#E1DFEE;"></div>
<div class="b" style="left:1.10px;top:356.30px;width:329.70px;height:1335.20px;background:#30295A;"></div>
<div class="b" style="left:331.00px;top:396.00px;width:2476.00px;height:1276.00px;background:#F1EFF5;border-radius:0 38px 33px 0;"></div>
<div class="b" style="left:2840.80px;top:356.30px;width:39.20px;height:1335.70px;background:#EBEEF2;"></div>
<svg class="s" width="2880" height="1800" viewBox="0 0 2880 1800" style=""><rect x="250" y="812" width="81.5" height="170" fill="#F1EFF5"/><path d="M66,396 H331 V818.5 A73,49.3 0 0 1 258,867.8 H129.5 A28.7,28.7 0 0 0 129.5,925.2 H258 A73,46 0 0 1 331,971 V1672 H66 A30,30 0 0 1 36,1642 V426 A30,30 0 0 1 66,396 Z" fill="#5E548E"/><path d="M129.5,868 H331 V925 H129.5 A28.5,28.5 0 0 1 129.5,868 Z" fill="#F1EFF5"/><path d="M119,538 L124.5,427.5 H137 L141.5,494 L186,471.5 V494 L230,471.5 V538 Z" fill="#F1EFF5"/><rect x="132" y="512" width="19.5" height="14.5" fill="#5E548E"/><rect x="165" y="512" width="19.5" height="14.5" fill="#5E548E"/><rect x="197.5" y="512" width="19.5" height="14.5" fill="#5E548E"/></svg>
<div class="t" style="left:95.50px;top:560.00px;font-size:29.20px;color:#F1EFF5;font-weight:700;transform:scaleX(0.9159);">COMPANY X</div>
<div class="t" style="left:95.50px;top:590.00px;font-size:29.20px;color:#F1EFF5;font-weight:700;transform:scaleX(0.9333);">Dashboards</div>
<div class="t" style="left:127.70px;top:675.00px;font-size:27.00px;color:#F1EFF5;transform:scaleX(0.9253);">Sales</div>
<div class="t" style="left:127.70px;top:745.00px;font-size:27.00px;color:#F1EFF5;transform:scaleX(0.9789);">Products</div>
<div class="t" style="left:127.70px;top:815.00px;font-size:27.00px;color:#F1EFF5;transform:scaleX(0.9806);">Customers</div>
<div class="t" style="left:128.00px;top:884.00px;font-size:27.00px;color:#5E548E;font-weight:700;transform:scaleX(0.9224);">Employees</div>
<div class="t" style="left:86.20px;top:958.00px;font-size:33.40px;color:#F1EFF5;font-weight:700;transform:scaleX(0.9596);">Filter Slicers</div>
<div class="b" style="left:51.20px;top:1009.00px;width:264.20px;height:638.00px;background:#F1EFF5;border-radius:15px;"></div>
<svg class="s" width="2880" height="1800" viewBox="0 0 2880 1800" style=""><path d="M181.5,1032.5 l3.8,3.8 l9.1,-8.6" fill="none" stroke="#333" stroke-width="2"/><path d="M196.5,1034.2 H211.3" stroke="#333" stroke-width="2"/><path d="M181.5,1042.3 l3.8,3.8 l9.1,-8.6" fill="none" stroke="#333" stroke-width="2"/><path d="M196.5,1044.2 H211.3" stroke="#333" stroke-width="2"/><path d="M181.5,1052.1 l3.8,3.8 l9.1,-8.6" fill="none" stroke="#333" stroke-width="2"/><path d="M196.5,1054.2 H211.3" stroke="#333" stroke-width="2"/><path d="M243.6,1026.7 H271.6 V1031.8 L261.1,1042.1 V1049.8 L254.2,1055.3 V1042.3 L243.6,1031.9 Z" fill="#ECECEE"/><path d="M262.3,1040.3 L271.6,1031.8 V1026.7 H243.6 V1031.9 L254.2,1042.3 V1055.0 L255.5,1056.0" fill="none" stroke="#8E8E8E" stroke-width="1.7" stroke-linejoin="round"/><path d="M258.9,1041.8 L274.8,1057.5 M274.8,1041.8 L258.9,1057.5" stroke="#BDBDBD" stroke-width="2"/><path d="M181.5,1271.1 l3.8,3.8 l9.1,-8.6" fill="none" stroke="#333" stroke-width="2"/><path d="M196.5,1272.8 H211.3" stroke="#333" stroke-width="2"/><path d="M181.5,1280.9 l3.8,3.8 l9.1,-8.6" fill="none" stroke="#333" stroke-width="2"/><path d="M196.5,1282.8 H211.3" stroke="#333" stroke-width="2"/><path d="M181.5,1290.7 l3.8,3.8 l9.1,-8.6" fill="none" stroke="#333" stroke-width="2"/><path d="M196.5,1292.8 H211.3" stroke="#333" stroke-width="2"/><path d="M243.6,1265.2 H271.6 V1270.3 L261.1,1280.6 V1288.3 L254.2,1293.8 V1280.8 L243.6,1270.4 Z" fill="#ECECEE"/><path d="M262.3,1278.8 L271.6,1270.3 V1265.2 H243.6 V1270.4 L254.2,1280.8 V1293.5 L255.5,1294.5" fill="none" stroke="#8E8E8E" stroke-width="1.7" stroke-linejoin="round"/><path d="M258.9,1280.3 L274.8,1296.0 M274.8,1280.3 L258.9,1296.0" stroke="#BDBDBD" stroke-width="2"/><path d="M81,1064.8 H281 M81,1304 H281" stroke="#2E5F80" stroke-width="1.4"/></svg>
<div class="t" style="left:81.50px;top:1031.00px;font-size:22.30px;color:#5E548E;font-weight:700;transform:scaleX(0.9346);">Status</div>
<div class="t" style="left:81.50px;top:1270.00px;font-size:22.30px;color:#5E548E;font-weight:700;transform:scaleX(0.9346);">Hire Year</div>
<div class="b" style="left:81.00px;top:1075.00px;width:200.00px;height:37.50px;background:#5E548E;border-radius:3px;"></div>
<div class="t" style="left:99.40px;top:1083.00px;font-size:22.30px;color:#fff;transform:scaleX(0.9884);">Contract</div>
<div class="b" style="left:81.00px;top:1119.00px;width:200.00px;height:37.50px;background:#5E548E;border-radius:3px;"></div>
<div class="t" style="left:99.40px;top:1127.00px;font-size:22.30px;color:#fff;transform:scaleX(0.9452);">Full Time</div>
<div class="b" style="left:81.00px;top:1163.00px;width:200.00px;height:37.50px;background:#5E548E;border-radius:3px;"></div>
<div class="t" style="left:99.40px;top:1171.00px;font-size:22.30px;color:#fff;transform:scaleX(0.9706);">Half-Time</div>
<div class="b" style="left:81.00px;top:1207.00px;width:200.00px;height:37.50px;background:#5E548E;border-radius:3px;"></div>
<div class="t" style="left:99.40px;top:1215.00px;font-size:22.30px;color:#fff;transform:scaleX(0.9699);">Hourly</div>
<div class="b" style="left:81.00px;top:1314.20px;width:96.50px;height:37.30px;background:#5E548E;border-radius:3px;"></div>
<div class="t" style="left:99.00px;top:1324.00px;font-size:21.50px;color:#fff;">2003</div>
<div class="b" style="left:184.00px;top:1314.20px;width:97.00px;height:37.30px;background:#5E548E;border-radius:3px;"></div>
<div class="t" style="left:202.00px;top:1324.00px;font-size:21.50px;color:#fff;">2004</div>
<div class="b" style="left:81.00px;top:1358.20px;width:96.50px;height:37.30px;background:#5E548E;border-radius:3px;"></div>
<div class="t" style="left:99.00px;top:1368.00px;font-size:21.50px;color:#fff;">2005</div>
<div class="b" style="left:184.00px;top:1358.20px;width:97.00px;height:37.30px;background:#5E548E;border-radius:3px;"></div>
<div class="t" style="left:202.00px;top:1368.00px;font-size:21.50px;color:#fff;">2006</div>
<div class="b" style="left:81.00px;top:1402.20px;width:96.50px;height:37.30px;background:#5E548E;border-radius:3px;"></div>
<div class="t" style="left:99.00px;top:1412.00px;font-size:21.50px;color:#fff;">2007</div>
<div class="b" style="left:184.00px;top:1402.20px;width:97.00px;height:37.30px;background:#5E548E;border-radius:3px;"></div>
<div class="t" style="left:202.00px;top:1412.00px;font-size:21.50px;color:#fff;">2008</div>
<div class="b" style="left:81.00px;top:1446.20px;width:96.50px;height:37.30px;background:#5E548E;border-radius:3px;"></div>
<div class="t" style="left:99.00px;top:1456.00px;font-size:21.50px;color:#fff;">2009</div>
<div class="b" style="left:184.00px;top:1446.20px;width:97.00px;height:37.30px;background:#5E548E;border-radius:3px;"></div>
<div class="t" style="left:202.00px;top:1456.00px;font-size:21.50px;color:#fff;transform:scaleX(1.0382);">2011</div>
<div class="b" style="left:81.00px;top:1490.20px;width:96.50px;height:37.30px;background:#5E548E;border-radius:3px;"></div>
<div class="t" style="left:99.00px;top:1500.00px;font-size:21.50px;color:#fff;">2012</div>
<div class="b" style="left:184.00px;top:1490.20px;width:97.00px;height:37.30px;background:#5E548E;border-radius:3px;"></div>
<div class="t" style="left:202.00px;top:1500.00px;font-size:21.50px;color:#fff;">2013</div>
<div class="b" style="left:81.00px;top:1534.20px;width:96.50px;height:37.30px;background:#5E548E;border-radius:3px;"></div>
<div class="t" style="left:99.00px;top:1544.00px;font-size:21.50px;color:#fff;">2014</div>
<div class="b" style="left:184.00px;top:1534.20px;width:97.00px;height:37.30px;background:#5E548E;border-radius:3px;"></div>
<div class="t" style="left:202.00px;top:1544.00px;font-size:21.50px;color:#fff;">2015</div>
<div class="b" style="left:81.00px;top:1578.20px;width:96.50px;height:37.30px;background:#5E548E;border-radius:3px;"></div>
<div class="t" style="left:99.00px;top:1588.00px;font-size:21.50px;color:#fff;">2016</div>
<div class="b" style="left:184.00px;top:1578.20px;width:97.00px;height:37.30px;background:#5E548E;border-radius:3px;"></div>
<div class="t" style="left:202.00px;top:1588.00px;font-size:21.50px;color:#fff;">2017</div>
<div class="b" style="left:353.50px;top:396.00px;width:2418.50px;height:60.80px;background:#fff;border-radius:0 0 12px 10px;"></div>
<svg class="s" width="2880" height="1800" viewBox="0 0 2880 1800" style=""><g fill="none" stroke="#5E548E"><path d="M397.5,413.5 H437.4 M397.5,436.4 H437.4" stroke-width="2.7"/><path d="M401.1,413.5 V436.4 M433.8,413.5 V436.4 M417.4,410.2 V413 M417.5,437 V449 M416.6,437.4 L406.4,447.2 M418.4,437.4 L428.5,447.2" stroke-width="2.1"/></g><rect x="409.2" y="418.1" width="3.8" height="13.8" fill="#5E548E"/><rect x="416" y="423" width="3.2" height="8.9" fill="#5E548E"/><rect x="421.9" y="427" width="4" height="4.9" fill="#5E548E"/><g fill="none" stroke="#5E548E" stroke-width="1.8" stroke-linecap="round" stroke-linejoin="round"><path d="M2290.9,418.6 A12.2,12.2 0 0 1 2309.3,418.3 M2311.2,421.3 A12.2,12.2 0 0 1 2302.1,438.5 M2298.6,438.6 A12.2,12.2 0 0 1 2288.8,422.0"/><path d="M2309.5,414.2 L2309.3,418.4 L2305.1,418.5 M2304,434.4 L2301.6,438.4 L2305.5,439.5 M2285.3,423.6 L2288.4,421.5 L2290.9,425.1"/></g></svg>
<div class="t" style="left:454.50px;top:415.00px;font-size:26.20px;color:#5E548E;">Welcome to</div>
<div class="t" style="left:601.40px;top:415.00px;font-size:26.20px;color:#5E548E;transform:scaleX(0.9845);">Company</div>
<div class="t" style="left:719.50px;top:415.00px;font-size:26.20px;color:#5E548E;transform:scaleX(0.8492);">&quot; X &quot;</div>
<div class="t" style="left:776.00px;top:415.00px;font-size:26.20px;color:#5E548E;font-weight:700;transform:scaleX(0.9498);">Employees</div>
<div class="t" style="left:915.30px;top:415.00px;font-size:26.20px;color:#5E548E;transform:scaleX(0.9869);">Dashboard</div>
<div class="t" style="left:2335.50px;top:411.00px;font-size:29.80px;color:#5E548E;font-weight:700;transform:scaleX(0.9117);">Last Update</div>
<div class="t" style="left:2503.60px;top:414.00px;font-size:26.40px;color:#5E548E;transform:scaleX(0.9465);">30 Jan 2026 , Friday</div>
<div class="b" style="left:353.00px;top:488.30px;width:552.80px;height:221.40px;background:#fff;border-radius:9px;"></div>
<div class="b" style="left:353.00px;top:488.30px;width:16.00px;height:221.40px;background:#55A15F;border-radius:9px 0 0 9px;"></div>
<div class="b" style="left:930.30px;top:488.50px;width:553.00px;height:221.20px;background:#fff;border-radius:9px;"></div>
<div class="b" style="left:930.30px;top:488.50px;width:16.00px;height:221.20px;background:#EBA496;border-radius:9px 0 0 9px;"></div>
<div class="b" style="left:1508.00px;top:485.90px;width:553.00px;height:221.00px;background:#fff;border-radius:9px;"></div>
<div class="b" style="left:1508.00px;top:485.90px;width:16.00px;height:221.00px;background:#F3C144;border-radius:9px 0 0 9px;"></div>
<svg class="s" width="2880" height="1800" viewBox="0 0 2880 1800" style=""><path d="M585.8,534 V677" stroke="#9B9B9B" stroke-width="2.6"/><path d="M1120.5,533 V676.5" stroke="#9B9B9B" stroke-width="2.6"/><path d="M1668.6,534.3 V677.6" stroke="#9B9B9B" stroke-width="2.6"/><g transform="translate(421.6,546) scale(1.0041,1.0034)" fill="#55A15F"><path d="M16.9,33.7 C19.5,30 20.8,25.5 21.8,21.8 L24.8,13.9 C26.5,10.5 28.8,8.2 31.7,6.4 C34.8,4 38,2.5 41.7,1.5 C43.7,0.7 45.6,0.2 47.6,0 L53.6,0.5 C55.2,1 56.5,2.2 57.5,3.5 L60.5,3 C63.2,4 65.6,5.8 67.5,7.9 C70,10.2 72,13 73.4,15.9 C75,18.5 76,21 76.4,23.8 C76.7,25.5 76.5,27.3 75.9,28.8 C75.3,30.6 74.4,32.3 73.4,33.7 L71.9,35.7 L66.3,36 L66,20.8 C64.6,20.2 63,19.9 61.5,20 C59.9,20.4 58.6,21.2 57.5,22.3 C56,24 54.8,26 53.6,27.8 C52.2,29.6 50.6,31.2 48.6,32.2 C46.5,33.3 44.1,33.7 41.7,33.7 Z"/><path d="M24.3,33.7 L30,33.7 C30,35.7 30.3,37.7 30.8,39.7 C31.4,42.2 32.4,44.5 33.7,46.6 C35.2,48.8 37.3,50.7 39.7,52 C42.1,53.3 44.8,54 47.6,54 C50.8,53.8 53.9,53 56.5,51.6 C58.9,50.1 61,48 62.5,45.6 C63.9,43.8 64.9,41.8 65.5,39.7 C66.1,37.1 66.3,34.4 66.3,31.7 L71.9,35.7 C71.7,37.7 71.4,39.7 70.9,41.7 C70.2,44.2 69,46.5 67.5,48.6 C66.2,50.6 64.7,52.4 63,54 L63,60 L58.8,64.5 L57,58.5 C54,59.6 50.8,60.1 47.6,60 C44.7,59.9 41.7,59.4 38.9,58.5 L37.3,64.5 L33.2,60 L33.2,54 C31.5,52.4 30,50.6 28.8,48.6 C27.2,46.2 26,43.5 25.3,40.7 C24.7,38.4 24.4,36 24.3,33.7 Z"/><path d="M33.2,60 L33.2,66 L38.2,118 C33,118 27.8,117.7 22.8,117 C17.7,116.4 12.7,115.4 7.9,114 C5.2,113 2.6,111.7 0.2,110 L0.2,83.3 C0.4,81.2 1,79.2 2,77.4 C3.5,75.4 5.5,73.7 7.9,72.4 C11.1,70.2 14.4,68.2 17.9,66.5 Z"/><path d="M63,60 L63,66 L58,118 C63.2,118 68.4,117.7 73.4,117 C78.5,116.4 83.5,115.4 88.3,114 C91,113 93.8,111.7 96.2,110 L96.2,83.3 C96,81.2 95.4,79.2 94.2,77.4 C92.7,75.4 90.7,73.7 88.3,72.4 C85.1,70.2 81.8,68.2 78.4,66.5 Z"/><path d="M40.9,68 L55.4,68 L53.3,75.9 L43.2,75.9 Z"/><path d="M43.7,79.4 L52.4,79.4 L54.6,108.6 L48.1,115 L41.7,108.6 Z"/><rect x="70.4" y="88.1" width="13.9" height="3.4" fill="#fff"/></g><g fill="none" stroke="#EBA496" stroke-width="2.6"><path d="M992.5,594 V557.5 H1032.5 V608"/><rect x="974.3" y="595.5" width="40" height="61"/><rect x="1015" y="608.5" width="37.5" height="48"/><path d="M1053.5,656.5 V566 L1093.7,571.5 V656.5 Z"/></g><rect x="1003.0" y="568.5" width="6" height="5.6" fill="#EBA496"/><rect x="1003.0" y="581.5" width="6" height="5.6" fill="#EBA496"/><rect x="1016.0" y="568.5" width="6" height="5.6" fill="#EBA496"/><rect x="1016.0" y="581.5" width="6" height="5.6" fill="#EBA496"/><rect x="985.0" y="606.0" width="6" height="5.6" fill="#EBA496"/><rect x="985.0" y="619.0" width="6" height="5.6" fill="#EBA496"/><rect x="985.0" y="632.0" width="6" height="5.6" fill="#EBA496"/><rect x="998.0" y="606.0" width="6" height="5.6" fill="#EBA496"/><rect x="998.0" y="619.0" width="6" height="5.6" fill="#EBA496"/><rect x="998.0" y="632.0" width="6" height="5.6" fill="#EBA496"/><rect x="1024.0" y="619.0" width="6" height="5.6" fill="#EBA496"/><rect x="1024.0" y="632.0" width="6" height="5.6" fill="#EBA496"/><rect x="1037.5" y="619.0" width="6" height="5.6" fill="#EBA496"/><rect x="1037.5" y="632.0" width="6" height="5.6" fill="#EBA496"/><rect x="1064.0" y="580.0" width="6" height="5.6" fill="#EBA496"/><rect x="1064.0" y="593.0" width="6" height="5.6" fill="#EBA496"/><rect x="1064.0" y="606.0" width="6" height="5.6" fill="#EBA496"/><rect x="1064.0" y="619.0" width="6" height="5.6" fill="#EBA496"/><rect x="1064.0" y="632.0" width="6" height="5.6" fill="#EBA496"/><rect x="1077.5" y="580.0" width="6" height="5.6" fill="#EBA496"/><rect x="1077.5" y="593.0" width="6" height="5.6" fill="#EBA496"/><rect x="1077.5" y="606.0" width="6" height="5.6" fill="#EBA496"/><rect x="1077.5" y="619.0" width="6" height="5.6" fill="#EBA496"/><rect x="1077.5" y="632.0" width="6" height="5.6" fill="#EBA496"/><rect x="991.5" y="645.5" width="6" height="11" fill="#EBA496"/><rect x="1031" y="645.5" width="6" height="11" fill="#EBA496"/><rect x="1070.5" y="645.5" width="6" height="11" fill="#EBA496"/><polygon points="1557.8,582.7 1562.1,595.5 1575.7,595.7 1564.8,603.8 1568.9,616.7 1557.8,608.9 1546.7,616.7 1550.8,603.8 1539.9,595.7 1553.5,595.5" fill="#fff" stroke="#F3C144" stroke-width="2.2" stroke-linejoin="miter"/><polygon points="1595.5,582.7 1599.8,595.5 1613.4,595.7 1602.5,603.8 1606.6,616.7 1595.5,608.9 1584.4,616.7 1588.5,603.8 1577.6,595.7 1591.2,595.5" fill="#fff" stroke="#F3C144" stroke-width="2.2" stroke-linejoin="miter"/><polygon points="1633.2,582.7 1637.5,595.5 1651.1,595.7 1640.2,603.8 1644.3,616.7 1633.2,608.9 1622.1,616.7 1626.2,603.8 1615.3,595.7 1628.9,595.5" fill="#fff" stroke="#F3C144" stroke-width="2.2" stroke-linejoin="miter"/></svg>
<div class="t" style="left:639.00px;top:526.00px;font-size:38.30px;color:#9A9A9A;transform:scaleX(0.8920);">#</div>
<div class="t" style="left:669.80px;top:526.00px;font-size:38.30px;color:#6F6F6F;transform:scaleX(0.9659);">Employees</div>
<div class="t" style="left:690.40px;top:605.00px;font-size:69.50px;color:#55A15F;font-weight:700;transform:scaleX(0.9469);">740</div>
<div class="t" style="left:1160.00px;top:528.00px;font-size:38.50px;color:#6F6F6F;transform:scaleX(0.8873);">#</div>
<div class="t" style="left:1190.50px;top:528.00px;font-size:38.50px;color:#808080;transform:scaleX(0.9959);">Departments</div>
<div class="t" style="left:1262.50px;top:596.00px;font-size:69.50px;color:#EBA496;font-weight:700;transform:scaleX(0.9378);">21</div>
<div class="t" style="left:1730.20px;top:531.00px;font-size:38.70px;color:#808080;transform:scaleX(0.9231);">AVG Jop Rating</div>
<div class="t" style="left:1778.60px;top:605.00px;font-size:69.50px;color:#F3C144;font-weight:700;transform:scaleX(0.9536);">3.20</div>
<svg class="s" width="2880" height="1800" viewBox="0 0 2880 1800" style=""><g fill="none" stroke="#5E548E" stroke-width="1.9" stroke-linejoin="miter"><path d="M404.1,742.1 L380.6,734.9 L366,783.5 L388.6,790.3"/><path d="M406.8,748.9 H388.9 V796.8 H417.5 C421,796.8 423.2,794.6 422.9,790 L422.9,779.9 H431.8 C436,779.9 438.3,776.5 438.9,772 V748.9 H430.6"/><path d="M417.5,796.8 C420.5,796.8 422.5,796.2 424.5,794.6 L436.5,783.5 C438,782 438.9,779.5 438.9,774.5"/><rect x="-8.2" y="-2.9" width="16.4" height="5.8" rx="2.9" transform="translate(426.3,729.5) rotate(25.5)"/><path d="M419,731.4 L414.5,738.8 C412.5,741 409,742 406.8,743.6 C408.5,747.5 412,750 414.5,750.7 C419,753 423.5,754.3 427.9,754.3 L428.5,750.1 L427,744.8 L429.4,735.2"/><path d="M414.5,740.4 C418,743 422.5,745 427,746"/><path d="M415.1,752.8 L412.4,759.3"/></g></svg>
<div class="t" style="left:468.60px;top:745.00px;font-size:43.60px;color:#5E548E;font-weight:700;transform:scaleX(0.9700);">Department</div>
<div class="t" style="left:724.00px;top:745.00px;font-size:43.60px;color:#5E548E;font-weight:700;transform:scaleX(0.9467);">informations:</div>
<div class="b" style="left:357.00px;top:823.00px;width:855.50px;height:572.30px;background:#fff;border-radius:11px;"></div>
<div class="b" style="left:357.00px;top:823.00px;width:17.00px;height:572.30px;background:#2E5F80;border-radius:11px 0 0 11px;"></div>
<div class="t" style="left:405.00px;top:852.00px;font-size:39.70px;color:#2E5F80;font-weight:700;transform:scaleX(0.9283);">Choose Department From The</div>
<div class="t" style="left:949.70px;top:848.00px;font-size:43.50px;color:#2E5F80;font-weight:700;transform:scaleX(0.9713);">21</div>
<svg class="s" width="2880" height="1800" viewBox="0 0 2880 1800" style=""><path d="M404,909.6 H1180.5" stroke="#2E5F80" stroke-width="1.6"/><path d="M1081.7,860.2 l3.7,3.8 l8.9,-8.6" fill="none" stroke="#333" stroke-width="2"/><path d="M1096.3,861.9 H1110.9" stroke="#333" stroke-width="2"/><path d="M1081.7,870.0 l3.7,3.8 l8.9,-8.6" fill="none" stroke="#333" stroke-width="2"/><path d="M1096.3,871.9 H1110.9" stroke="#333" stroke-width="2"/><path d="M1081.7,879.8 l3.7,3.8 l8.9,-8.6" fill="none" stroke="#333" stroke-width="2"/><path d="M1096.3,881.9 H1110.9" stroke="#333" stroke-width="2"/><path d="M1143.4,854.9 H1171.4 V859.9 L1160.9,870.1 V877.8 L1154.0,883.3 V870.3 L1143.4,860.1 Z" fill="#ECECEE"/><path d="M1162.1,868.3 L1171.4,859.9 V854.9 H1143.4 V860.1 L1154.0,870.3 V883.0 L1155.3,883.9" fill="none" stroke="#8E8E8E" stroke-width="1.7" stroke-linejoin="round"/><path d="M1158.7,869.8 L1174.6,885.4 M1174.6,869.8 L1158.7,885.4" stroke="#BDBDBD" stroke-width="2"/></svg>
<div class="b" style="left:404.00px;top:919.00px;width:254.80px;height:57.00px;background:#2E5F80;border-radius:3.5px;"></div>
<div class="t" style="left:422.50px;top:934.00px;font-size:29.00px;color:#fff;transform:scaleX(0.9735);">Account Mana...</div>
<div class="b" style="left:665.00px;top:919.00px;width:254.80px;height:57.00px;background:#2E5F80;border-radius:3.5px;"></div>
<div class="t" style="left:683.50px;top:934.00px;font-size:29.00px;color:#fff;transform:scaleX(0.9146);">ADC</div>
<div class="b" style="left:926.00px;top:919.00px;width:254.80px;height:57.00px;background:#2E5F80;border-radius:3.5px;"></div>
<div class="t" style="left:944.50px;top:934.00px;font-size:29.00px;color:#fff;transform:scaleX(0.9723);">Creative</div>
<div class="b" style="left:404.00px;top:982.00px;width:254.80px;height:57.00px;background:#2E5F80;border-radius:3.5px;"></div>
<div class="t" style="left:422.50px;top:997.00px;font-size:29.00px;color:#fff;transform:scaleX(0.9742);">Environmental ...</div>
<div class="b" style="left:665.00px;top:982.00px;width:254.80px;height:57.00px;background:#2E5F80;border-radius:3.5px;"></div>
<div class="t" style="left:683.50px;top:997.00px;font-size:29.00px;color:#fff;transform:scaleX(0.9742);">Environmental ...</div>
<div class="b" style="left:926.00px;top:982.00px;width:254.80px;height:57.00px;background:#2E5F80;border-radius:3.5px;"></div>
<div class="t" style="left:944.50px;top:997.00px;font-size:29.00px;color:#fff;transform:scaleX(0.9808);">Facilities/Engin...</div>
<div class="b" style="left:404.00px;top:1045.00px;width:254.80px;height:57.00px;background:#2E5F80;border-radius:3.5px;"></div>
<div class="t" style="left:422.50px;top:1060.00px;font-size:29.00px;color:#fff;transform:scaleX(0.9695);">Green Building</div>
<div class="b" style="left:665.00px;top:1045.00px;width:254.80px;height:57.00px;background:#2E5F80;border-radius:3.5px;"></div>
<div class="t" style="left:683.50px;top:1060.00px;font-size:29.00px;color:#fff;transform:scaleX(0.9742);">Human Resour...</div>
<div class="b" style="left:926.00px;top:1045.00px;width:254.80px;height:57.00px;background:#2E5F80;border-radius:3.5px;"></div>
<div class="t" style="left:944.50px;top:1060.00px;font-size:29.00px;color:#fff;transform:scaleX(0.8149);">IT</div>
<div class="b" style="left:404.00px;top:1108.00px;width:254.80px;height:57.00px;background:#2E5F80;border-radius:3.5px;"></div>
<div class="t" style="left:422.50px;top:1123.00px;font-size:29.00px;color:#fff;transform:scaleX(0.9543);">Major Mfg Proj...</div>
<div class="b" style="left:665.00px;top:1108.00px;width:254.80px;height:57.00px;background:#2E5F80;border-radius:3.5px;"></div>
<div class="t" style="left:683.50px;top:1123.00px;font-size:29.00px;color:#fff;transform:scaleX(0.9903);">Manufacturing</div>
<div class="b" style="left:926.00px;top:1108.00px;width:254.80px;height:57.00px;background:#2E5F80;border-radius:3.5px;"></div>
<div class="t" style="left:944.50px;top:1123.00px;font-size:29.00px;color:#fff;transform:scaleX(0.9768);">Manufacturing ...</div>
<div class="b" style="left:404.00px;top:1171.00px;width:254.80px;height:57.00px;background:#2E5F80;border-radius:3.5px;"></div>
<div class="t" style="left:422.50px;top:1186.00px;font-size:29.00px;color:#fff;transform:scaleX(0.9738);">Marketing</div>
<div class="b" style="left:665.00px;top:1171.00px;width:254.80px;height:57.00px;background:#2E5F80;border-radius:3.5px;"></div>
<div class="t" style="left:683.50px;top:1186.00px;font-size:29.00px;color:#fff;transform:scaleX(0.9710);">Product Develo...</div>
<div class="b" style="left:926.00px;top:1171.00px;width:254.80px;height:57.00px;background:#2E5F80;border-radius:3.5px;"></div>
<div class="t" style="left:944.50px;top:1186.00px;font-size:29.00px;color:#fff;transform:scaleX(0.9769);">Professional Tr...</div>
<div class="b" style="left:404.00px;top:1234.00px;width:254.80px;height:57.00px;background:#2E5F80;border-radius:3.5px;"></div>
<div class="t" style="left:422.50px;top:1249.00px;font-size:29.00px;color:#fff;transform:scaleX(0.9709);">Quality Assura...</div>
<div class="b" style="left:665.00px;top:1234.00px;width:254.80px;height:57.00px;background:#2E5F80;border-radius:3.5px;"></div>
<div class="t" style="left:683.50px;top:1249.00px;font-size:29.00px;color:#fff;transform:scaleX(0.9906);">Quality Control</div>
<div class="b" style="left:926.00px;top:1234.00px;width:254.80px;height:57.00px;background:#2E5F80;border-radius:3.5px;"></div>
<div class="t" style="left:944.50px;top:1249.00px;font-size:29.00px;color:#fff;transform:scaleX(0.9716);">Research Center</div>
<div class="b" style="left:404.00px;top:1297.00px;width:254.80px;height:57.00px;background:#2E5F80;border-radius:3.5px;"></div>
<div class="t" style="left:422.50px;top:1312.00px;font-size:29.00px;color:#fff;transform:scaleX(0.9817);">Research/Dev...</div>
<div class="b" style="left:665.00px;top:1297.00px;width:254.80px;height:57.00px;background:#2E5F80;border-radius:3.5px;"></div>
<div class="t" style="left:683.50px;top:1312.00px;font-size:29.00px;color:#fff;transform:scaleX(0.9649);">Sales</div>
<div class="b" style="left:926.00px;top:1297.00px;width:254.80px;height:57.00px;background:#2E5F80;border-radius:3.5px;"></div>
<div class="t" style="left:944.50px;top:1312.00px;font-size:29.00px;color:#fff;transform:scaleX(0.9643);">Training</div>
<div class="b" style="left:1230.30px;top:823.40px;width:831.70px;height:572.20px;background:#fff;border-radius:11px;"></div>
<div class="b" style="left:1230.30px;top:823.40px;width:16.00px;height:572.20px;background:#2E5F80;border-radius:11px 0 0 11px;"></div>
<svg class="s" width="2880" height="1800" viewBox="0 0 2880 1800" style=""><g transform="translate(1259.8,852.8) scale(1.0000,1.0000)" fill="none" stroke="#2E5F80" stroke-width="2.10" stroke-linecap="butt"><circle cx="42.9" cy="23.8" r="22.9"/><circle cx="43.2" cy="20.2" r="9.2"/><path d="M28.9,37.2 Q43.2,29.4 57.4,37.2"/><path d="M23.2,6 A8.15,8.15 0 1 0 16.7,21.4"/><path d="M63.1,6 A8.15,8.15 0 1 1 69.6,21.4"/><path d="M16.7,26.5 C7.5,28 2.3,30.5 1.8,36 L1.2,43.8"/><path d="M69.6,26.5 C78.8,28 84,30.5 84.5,36 L85.1,43.8"/><path d="M27.1,45.8 Q25.8,47.5 25.8,50 L25.8,55.7"/><path d="M59.5,40.5 L63.4,44.3"/><rect x="-11.2" y="-4.5" width="22.4" height="9" rx="4.3" transform="translate(71.6,53.5) rotate(44.5)"/></g><rect x="1359.5" y="905.8" width="355.5" height="3.2" fill="#2E5F80"/><path d="M1575.60,971.00 A178.0,178.0 0 0 1 1752.52,1168.61 L1707.49,1163.62 A132.7,132.7 0 0 0 1575.60,1016.30 Z" fill="#2E5F80" stroke="#fff" stroke-width="3.4" stroke-linejoin="miter"/><path d="M1752.52,1168.61 A178.0,178.0 0 1 1 1405.84,1095.46 L1449.04,1109.09 A132.7,132.7 0 1 0 1707.49,1163.62 Z" fill="#D97941" stroke="#fff" stroke-width="3.4" stroke-linejoin="miter"/><path d="M1405.84,1095.46 A178.0,178.0 0 0 1 1496.80,989.39 L1516.85,1030.01 A132.7,132.7 0 0 0 1449.04,1109.09 Z" fill="#35682D" stroke="#fff" stroke-width="3.4" stroke-linejoin="miter"/><path d="M1496.80,989.39 A178.0,178.0 0 0 1 1575.60,971.00 L1575.60,1016.30 A132.7,132.7 0 0 0 1516.85,1030.01 Z" fill="#4595CE" stroke="#fff" stroke-width="3.4" stroke-linejoin="miter"/><g fill="none" stroke="#A6A6A6" stroke-width="1.6"><path d="M1540,997 L1548,939.5 H1559.5"/><path d="M1691.7,1045.3 L1752.4,1088 H1763.5"/><path d="M1456.7,1048 L1371.8,1088 H1360.3"/><path d="M1542.8,1302.5 L1510,1349.6 H1499"/></g><g fill="none" stroke="#2E5F80" stroke-width="3"><rect x="1529.2" y="1085.3" width="95.4" height="126.7"/><path d="M1544.5,1109.5 H1610 M1544.5,1122.5 H1610 M1544.5,1135.5 H1610 M1577,1148.5 H1610 M1544.5,1181.5 H1577"/><path d="M1589,1172 L1608,1191 M1608,1172 L1589,1191" stroke-width="3.2"/></g><rect x="1896" y="1005.5" width="9.2" height="9.2" fill="#2E5F80"/><rect x="1896" y="1050.5" width="9.2" height="9.2" fill="#D97941"/><rect x="1896" y="1095.5" width="9.2" height="9.2" fill="#35682D"/><rect x="1896" y="1140.5" width="9.2" height="9.2" fill="#4595CE"/></svg>
<div class="t" style="left:1359.50px;top:854.00px;font-size:44.20px;color:#2E5F80;font-weight:700;transform:scaleX(0.9187);">Employees Stutas</div>
<div class="t" style="left:1568.60px;top:929.00px;font-size:21.50px;color:#404040;transform:scaleX(0.9744);">7.30%</div>
<div class="t" style="left:1773.00px;top:1079.00px;font-size:21.50px;color:#404040;transform:scaleX(0.9778);">26.76%</div>
<div class="t" style="left:1279.50px;top:1079.00px;font-size:21.50px;color:#404040;transform:scaleX(0.9846);">12.84%</div>
<div class="t" style="left:1417.00px;top:1341.00px;font-size:21.50px;color:#404040;transform:scaleX(1.0053);">53.11%</div>
<div class="t" style="left:1913.20px;top:997.00px;font-size:23.80px;color:#595959;transform:scaleX(0.9116);">Contract</div>
<div class="t" style="left:1913.20px;top:1042.00px;font-size:23.80px;color:#595959;transform:scaleX(0.8805);">Full Time</div>
<div class="t" style="left:1913.20px;top:1087.00px;font-size:23.80px;color:#595959;transform:scaleX(0.9046);">Half-Time</div>
<div class="t" style="left:1913.20px;top:1132.00px;font-size:23.80px;color:#595959;transform:scaleX(0.9015);">Hourly</div>
<div class="b" style="left:360.50px;top:1418.00px;width:410.00px;height:221.00px;background:#fff;border-radius:8px;"></div>
<div class="b" style="left:360.50px;top:1418.00px;width:12.00px;height:221.00px;background:#2F5C99;border-radius:8px 0 0 8px;"></div>
<div class="b" style="left:791.80px;top:1420.50px;width:411.00px;height:220.50px;background:#fff;border-radius:8px;"></div>
<div class="b" style="left:791.80px;top:1420.50px;width:12.00px;height:220.50px;background:#2F6DB7;border-radius:8px 0 0 8px;"></div>
<div class="b" style="left:1222.30px;top:1420.50px;width:410.20px;height:220.50px;background:#fff;border-radius:8px;"></div>
<div class="b" style="left:1222.30px;top:1420.50px;width:10.50px;height:220.50px;background:#5B8FD7;border-radius:8px 0 0 8px;"></div>
<div class="b" style="left:1651.80px;top:1416.70px;width:411.00px;height:222.30px;background:#fff;border-radius:8px;"></div>
<div class="b" style="left:1651.80px;top:1416.70px;width:11.00px;height:222.30px;background:#A5DCF5;border-radius:8px 0 0 8px;"></div>
<svg class="s" width="2880" height="1800" viewBox="0 0 2880 1800" style=""><path d="M503.6,1465 V1608" stroke="#9B9B9B" stroke-width="2.4"/><path d="M934.3,1455.8 V1599.7" stroke="#9B9B9B" stroke-width="2.4"/><path d="M1366.2,1455 V1599.7" stroke="#9B9B9B" stroke-width="2.4"/><path d="M1774.6,1455.8 V1600.8" stroke="#9B9B9B" stroke-width="2.4"/><g transform="translate(399.5,1490) scale(0.7521,0.7458)" fill="#2F5C99"><path d="M16.9,33.7 C19.5,30 20.8,25.5 21.8,21.8 L24.8,13.9 C26.5,10.5 28.8,8.2 31.7,6.4 C34.8,4 38,2.5 41.7,1.5 C43.7,0.7 45.6,0.2 47.6,0 L53.6,0.5 C55.2,1 56.5,2.2 57.5,3.5 L60.5,3 C63.2,4 65.6,5.8 67.5,7.9 C70,10.2 72,13 73.4,15.9 C75,18.5 76,21 76.4,23.8 C76.7,25.5 76.5,27.3 75.9,28.8 C75.3,30.6 74.4,32.3 73.4,33.7 L71.9,35.7 L66.3,36 L66,20.8 C64.6,20.2 63,19.9 61.5,20 C59.9,20.4 58.6,21.2 57.5,22.3 C56,24 54.8,26 53.6,27.8 C52.2,29.6 50.6,31.2 48.6,32.2 C46.5,33.3 44.1,33.7 41.7,33.7 Z"/><path d="M24.3,33.7 L30,33.7 C30,35.7 30.3,37.7 30.8,39.7 C31.4,42.2 32.4,44.5 33.7,46.6 C35.2,48.8 37.3,50.7 39.7,52 C42.1,53.3 44.8,54 47.6,54 C50.8,53.8 53.9,53 56.5,51.6 C58.9,50.1 61,48 62.5,45.6 C63.9,43.8 64.9,41.8 65.5,39.7 C66.1,37.1 66.3,34.4 66.3,31.7 L71.9,35.7 C71.7,37.7 71.4,39.7 70.9,41.7 C70.2,44.2 69,46.5 67.5,48.6 C66.2,50.6 64.7,52.4 63,54 L63,60 L58.8,64.5 L57,58.5 C54,59.6 50.8,60.1 47.6,60 C44.7,59.9 41.7,59.4 38.9,58.5 L37.3,64.5 L33.2,60 L33.2,54 C31.5,52.4 30,50.6 28.8,48.6 C27.2,46.2 26,43.5 25.3,40.7 C24.7,38.4 24.4,36 24.3,33.7 Z"/><path d="M33.2,60 L33.2,66 L38.2,118 C33,118 27.8,117.7 22.8,117 C17.7,116.4 12.7,115.4 7.9,114 C5.2,113 2.6,111.7 0.2,110 L0.2,83.3 C0.4,81.2 1,79.2 2,77.4 C3.5,75.4 5.5,73.7 7.9,72.4 C11.1,70.2 14.4,68.2 17.9,66.5 Z"/><path d="M63,60 L63,66 L58,118 C63.2,118 68.4,117.7 73.4,117 C78.5,116.4 83.5,115.4 88.3,114 C91,113 93.8,111.7 96.2,110 L96.2,83.3 C96,81.2 95.4,79.2 94.2,77.4 C92.7,75.4 90.7,73.7 88.3,72.4 C85.1,70.2 81.8,68.2 78.4,66.5 Z"/><path d="M40.9,68 L55.4,68 L53.3,75.9 L43.2,75.9 Z"/><path d="M43.7,79.4 L52.4,79.4 L54.6,108.6 L48.1,115 L41.7,108.6 Z"/><rect x="70.4" y="88.1" width="13.9" height="3.4" fill="#fff"/></g><g fill="none" stroke="#2F6DB7"><rect x="863.5" y="1483.5" width="50" height="21" stroke-width="5"/><rect x="863.5" y="1522" width="50" height="20.5" stroke-width="2.4"/><rect x="863.5" y="1558.5" width="50" height="20.5" stroke-width="2.4"/><path d="M845,1561.5 C824,1545 822,1505 847,1484.5" stroke-width="2.4"/><path d="M820,1483.5 H848.5 V1513.5" stroke-width="2.4"/></g><g fill="none" stroke="#5B8FD7"><rect x="1290" y="1482" width="50.5" height="21" stroke-width="2.4"/><rect x="1290" y="1518" width="50.5" height="21" stroke-width="2.4"/><rect x="1290" y="1555.5" width="51" height="22" stroke-width="5"/><path d="M1271.5,1499.5 C1250,1515 1248,1555 1273,1576.5" stroke-width="2.4"/><path d="M1245.5,1578 H1274.5 V1546" stroke-width="2.4"/></g><g fill="none" stroke="#A5DCF5" stroke-width="3"><rect x="1678.5" y="1477.5" width="79.5" height="116.5" rx="6"/><rect x="1693" y="1490.5" width="50.5" height="24"/></g><rect x="1693" y="1527.2" width="6" height="6" fill="#A5DCF5"/><rect x="1708" y="1527.2" width="6" height="6" fill="#A5DCF5"/><rect x="1723" y="1527.2" width="6" height="6" fill="#A5DCF5"/><rect x="1738" y="1527.2" width="6" height="6" fill="#A5DCF5"/><rect x="1693" y="1542.2" width="6" height="6" fill="#A5DCF5"/><rect x="1708" y="1542.2" width="6" height="6" fill="#A5DCF5"/><rect x="1723" y="1542.2" width="6" height="6" fill="#A5DCF5"/><rect x="1738" y="1542.2" width="6" height="6" fill="#A5DCF5"/><rect x="1693" y="1557.2" width="6" height="6" fill="#A5DCF5"/><rect x="1708" y="1557.2" width="6" height="6" fill="#A5DCF5"/><rect x="1723" y="1557.2" width="6" height="6" fill="#A5DCF5"/><rect x="1738" y="1557.2" width="6" height="6" fill="#A5DCF5"/><rect x="1693" y="1572.2" width="21" height="6" fill="#A5DCF5"/><rect x="1723" y="1572.2" width="6" height="6" fill="#A5DCF5"/><rect x="1738" y="1572.2" width="6" height="6" fill="#A5DCF5"/></svg>
<div class="t" style="left:524.80px;top:1455.00px;font-size:36.80px;color:#9A9A9A;transform:scaleX(0.9283);">#</div>
<div class="t" style="left:555.00px;top:1455.00px;font-size:36.80px;color:#6F6F6F;transform:scaleX(1.0107);">Employees</div>
<div class="t" style="left:588.40px;top:1522.00px;font-size:57.50px;color:#2E5F80;font-weight:700;transform:scaleX(0.9850);">740</div>
<div class="t" style="left:585.40px;top:1584.00px;font-size:25.50px;color:#55A15F;transform:scaleX(1.1026);">100.00%</div>
<div class="t" style="left:986.00px;top:1456.00px;font-size:35.00px;color:#6F6F6F;transform:scaleX(0.8767);">MAX Salary</div>
<div class="t" style="left:957.30px;top:1525.00px;font-size:46.00px;color:#55A15F;font-weight:700;transform:scaleX(1.0555);">$7,482.0</div>
<div class="t" style="left:1420.50px;top:1456.00px;font-size:35.00px;color:#6F6F6F;transform:scaleX(0.9070);">MIN Salary</div>
<div class="t" style="left:1419.40px;top:1525.00px;font-size:46.00px;color:#55A15F;font-weight:700;transform:scaleX(1.0448);">$741.0</div>
<div class="t" style="left:1823.70px;top:1456.00px;font-size:35.00px;color:#6F6F6F;transform:scaleX(0.8932);">AVG Salary</div>
<div class="t" style="left:1806.20px;top:1525.00px;font-size:46.00px;color:#55A15F;font-weight:700;transform:scaleX(1.0496);">$4,258.15</div>
<div class="b" style="left:2085.00px;top:478.00px;width:687.00px;height:1164.50px;background:#fff;border-radius:11px 20px 20px 11px;"></div>
<div class="b" style="left:2085.00px;top:478.00px;width:16.00px;height:1164.50px;background:#5E548E;border-radius:11px 0 0 11px;"></div>
<svg class="s" width="2880" height="1800" viewBox="0 0 2880 1800" style=""><g transform="translate(2117,531.3) scale(1.0000,1.0000)" fill="none" stroke="#5E548E" stroke-width="2.10" stroke-linecap="butt"><circle cx="42.9" cy="23.8" r="22.9"/><circle cx="43.2" cy="20.2" r="9.2"/><path d="M28.9,37.2 Q43.2,29.4 57.4,37.2"/><path d="M23.2,6 A8.15,8.15 0 1 0 16.7,21.4"/><path d="M63.1,6 A8.15,8.15 0 1 1 69.6,21.4"/><path d="M16.7,26.5 C7.5,28 2.3,30.5 1.8,36 L1.2,43.8"/><path d="M69.6,26.5 C78.8,28 84,30.5 84.5,36 L85.1,43.8"/><path d="M27.1,45.8 Q25.8,47.5 25.8,50 L25.8,55.7"/><path d="M59.5,40.5 L63.4,44.3"/><rect x="-11.2" y="-4.5" width="22.4" height="9" rx="4.3" transform="translate(71.6,53.5) rotate(44.5)"/></g><rect x="2226" y="586.7" width="530" height="3.5" fill="#5E548E"/><path d="M2346.8,632 V1613.5" stroke="#CFCFCF" stroke-width="1.6"/><rect x="2348" y="647.00" width="323.5" height="17" fill="#2E5F80"/><rect x="2348" y="693.77" width="201.4" height="17" fill="#2E5F80"/><rect x="2348" y="740.54" width="184.2" height="17" fill="#2E5F80"/><rect x="2348" y="787.31" width="156.4" height="17" fill="#2E5F80"/><rect x="2348" y="834.08" width="126.4" height="17" fill="#2E5F80"/><rect x="2348" y="880.85" width="109.3" height="17" fill="#2E5F80"/><rect x="2348" y="927.62" width="92.1" height="17" fill="#2E5F80"/><rect x="2348" y="974.39" width="81.4" height="17" fill="#2E5F80"/><rect x="2348" y="1021.16" width="49.3" height="17" fill="#2E5F80"/><rect x="2348" y="1067.93" width="40.7" height="17" fill="#2E5F80"/><rect x="2348" y="1114.70" width="36.4" height="17" fill="#2E5F80"/><rect x="2348" y="1161.47" width="34.3" height="17" fill="#2E5F80"/><rect x="2348" y="1208.24" width="30.0" height="17" fill="#2E5F80"/><rect x="2348" y="1255.01" width="19.3" height="17" fill="#2E5F80"/><rect x="2348" y="1301.78" width="19.3" height="17" fill="#2E5F80"/><rect x="2348" y="1348.55" width="17.1" height="17" fill="#2E5F80"/><rect x="2348" y="1395.32" width="17.1" height="17" fill="#2E5F80"/><rect x="2348" y="1442.09" width="15.0" height="17" fill="#2E5F80"/><rect x="2348" y="1488.86" width="10.7" height="17" fill="#2E5F80"/><rect x="2348" y="1535.63" width="10.7" height="17" fill="#2E5F80"/><rect x="2348" y="1582.40" width="10.7" height="17" fill="#2E5F80"/></svg>
<div class="t" style="left:2222.30px;top:536.00px;font-size:45.00px;color:#5E548E;font-weight:700;transform:scaleX(0.9192);">Employees in Departments</div>
<div class="t" style="left:2180.30px;top:644.00px;font-size:23.20px;color:#5E548E;font-weight:700;transform:scaleX(0.9041);">Manufacturing</div>
<div class="t" style="left:2687.00px;top:645.00px;font-size:23.00px;color:#5E548E;">151</div>
<div class="t" style="left:2174.10px;top:690.00px;font-size:23.20px;color:#5E548E;font-weight:700;transform:scaleX(0.8994);">Quality Control</div>
<div class="t" style="left:2564.89px;top:692.00px;font-size:23.00px;color:#5E548E;">94</div>
<div class="t" style="left:2242.30px;top:737.00px;font-size:23.20px;color:#5E548E;font-weight:700;transform:scaleX(0.9007);">Account...</div>
<div class="t" style="left:2547.75px;top:739.00px;font-size:23.00px;color:#5E548E;">86</div>
<div class="t" style="left:2145.30px;top:784.00px;font-size:23.20px;color:#5E548E;font-weight:700;transform:scaleX(0.8848);">Quality Assurance</div>
<div class="t" style="left:2519.90px;top:786.00px;font-size:23.00px;color:#5E548E;">73</div>
<div class="t" style="left:2158.30px;top:831.00px;font-size:23.20px;color:#5E548E;font-weight:700;transform:scaleX(0.9140);">Facilities/Engine...</div>
<div class="t" style="left:2489.90px;top:832.00px;font-size:23.00px;color:#5E548E;">59</div>
<div class="t" style="left:2225.80px;top:877.00px;font-size:23.20px;color:#5E548E;font-weight:700;transform:scaleX(0.9034);">Marketing</div>
<div class="t" style="left:2472.76px;top:879.00px;font-size:23.00px;color:#5E548E;">51</div>
<div class="t" style="left:2307.50px;top:924.00px;font-size:23.20px;color:#5E548E;font-weight:700;transform:scaleX(0.8391);">IT</div>
<div class="t" style="left:2455.62px;top:926.00px;font-size:23.00px;color:#5E548E;">43</div>
<div class="t" style="left:2246.70px;top:971.00px;font-size:23.20px;color:#5E548E;font-weight:700;transform:scaleX(0.9029);">Product...</div>
<div class="t" style="left:2444.91px;top:973.00px;font-size:23.00px;color:#5E548E;">38</div>
<div class="t" style="left:2269.80px;top:1018.00px;font-size:23.20px;color:#5E548E;font-weight:700;transform:scaleX(0.9071);">Sales</div>
<div class="t" style="left:2412.78px;top:1019.00px;font-size:23.00px;color:#5E548E;">23</div>
<div class="t" style="left:2241.10px;top:1064.00px;font-size:23.20px;color:#5E548E;font-weight:700;transform:scaleX(0.9141);">Creative</div>
<div class="t" style="left:2404.21px;top:1066.00px;font-size:23.00px;color:#5E548E;">19</div>
<div class="t" style="left:2244.80px;top:1111.00px;font-size:23.20px;color:#5E548E;font-weight:700;transform:scaleX(0.8866);">Training</div>
<div class="t" style="left:2399.92px;top:1113.00px;font-size:23.00px;color:#5E548E;">17</div>
<div class="t" style="left:2199.70px;top:1158.00px;font-size:23.20px;color:#5E548E;font-weight:700;transform:scaleX(0.9055);">Professional...</div>
<div class="t" style="left:2397.78px;top:1160.00px;font-size:23.00px;color:#5E548E;">16</div>
<div class="t" style="left:2179.30px;top:1205.00px;font-size:23.20px;color:#5E548E;font-weight:700;transform:scaleX(0.9087);">Environmental...</div>
<div class="t" style="left:2393.49px;top:1207.00px;font-size:23.00px;color:#5E548E;">14</div>
<div class="t" style="left:2179.30px;top:1252.00px;font-size:23.20px;color:#5E548E;font-weight:700;transform:scaleX(0.9087);">Environmental...</div>
<div class="t" style="left:2382.78px;top:1253.00px;font-size:23.00px;color:#5E548E;">9</div>
<div class="t" style="left:2144.50px;top:1298.00px;font-size:23.20px;color:#5E548E;font-weight:700;transform:scaleX(0.8850);">Human Resources</div>
<div class="t" style="left:2382.78px;top:1300.00px;font-size:23.00px;color:#5E548E;">9</div>
<div class="t" style="left:2178.80px;top:1345.00px;font-size:23.20px;color:#5E548E;font-weight:700;transform:scaleX(0.8781);">Green Building</div>
<div class="t" style="left:2380.64px;top:1347.00px;font-size:23.00px;color:#5E548E;">8</div>
<div class="t" style="left:2142.80px;top:1392.00px;font-size:23.20px;color:#5E548E;font-weight:700;transform:scaleX(0.8769);">Major Mfg Projects</div>
<div class="t" style="left:2380.64px;top:1394.00px;font-size:23.00px;color:#5E548E;">8</div>
<div class="t" style="left:2180.30px;top:1439.00px;font-size:23.20px;color:#5E548E;font-weight:700;transform:scaleX(0.9098);">Manufacturing...</div>
<div class="t" style="left:2378.50px;top:1440.00px;font-size:23.00px;color:#5E548E;">7</div>
<div class="t" style="left:2153.70px;top:1485.00px;font-size:23.20px;color:#5E548E;font-weight:700;transform:scaleX(0.9189);">Research/Develo...</div>
<div class="t" style="left:2374.21px;top:1487.00px;font-size:23.00px;color:#5E548E;">5</div>
<div class="t" style="left:2158.80px;top:1532.00px;font-size:23.20px;color:#5E548E;font-weight:700;transform:scaleX(0.9002);">Research Center</div>
<div class="t" style="left:2374.21px;top:1534.00px;font-size:23.00px;color:#5E548E;">5</div>
<div class="t" style="left:2282.30px;top:1579.00px;font-size:23.20px;color:#5E548E;font-weight:700;transform:scaleX(0.8455);">ADC</div>
<div class="t" style="left:2374.21px;top:1581.00px;font-size:23.00px;color:#5E548E;">5</div>
<div class="b" style="left:0.00px;top:1691.50px;width:2880.00px;height:65.00px;background:#E9EBF1;"></div>
<div class="b" style="left:0.00px;top:1755.00px;width:2880.00px;height:45.00px;background:#F3F3F3;border-top:2px solid #fff;"></div>
<div class="b" style="left:2844.00px;top:357.00px;width:34.00px;height:1335.50px;background:#F5F5F5;border-radius:16.5px;"></div>
<div class="b" style="left:2853.30px;top:389.80px;width:15.60px;height:832.00px;background:#707070;border-radius:8px;"></div>
<div class="b" style="left:2300.60px;top:1706.00px;width:542.70px;height:32.00px;background:#F3F3F5;border-radius:16px;"></div>
<div class="b" style="left:2333.80px;top:1714.00px;width:407.20px;height:15.60px;background:#707070;border-radius:8px;"></div>
<div class="b" style="left:216.00px;top:1699.40px;width:241.70px;height:47.20px;background:#5E548E;border-radius:8px;"></div>
<div class="b" style="left:475.70px;top:1699.40px;width:290.10px;height:47.20px;background:#5E548E;border-radius:8px;"></div>
<div class="b" style="left:783.70px;top:1699.40px;width:313.10px;height:47.20px;background:#5E548E;border-radius:8px;"></div>
<div class="b" style="left:1115.00px;top:1691.20px;width:314.50px;height:54.60px;background:#fff;border-radius:9px;border:2px solid #fff;background:linear-gradient(#F6F6F9 0%,#F1F0F6 45%,#C9C4DE 100%);box-shadow:0 1px 3px rgba(0,0,0,.30);"></div>
<div class="b" style="left:1131.50px;top:1737.00px;width:281.00px;height:3.80px;background:#2B7A3E;"></div>
<div class="b" style="left:2284.60px;top:1757.00px;width:79.00px;height:43.00px;background:#DCDCDC;"></div>
<svg class="s" width="2880" height="1800" viewBox="0 0 2880 1800" style=""><path d="M466.5,1706 V1740" stroke="#D3D4DA" stroke-width="1.6"/><path d="M775,1706 V1740" stroke="#D3D4DA" stroke-width="1.6"/><path d="M1106,1706 V1740" stroke="#D3D4DA" stroke-width="1.6"/><path d="M1438,1706 V1740" stroke="#D3D4DA" stroke-width="1.6"/><path d="M52,1712.8 L42.8,1721.7 L52,1730.6 M107.8,1712.8 L117,1721.7 L107.8,1730.6" fill="none" stroke="#8C8C8C" stroke-width="1.9"/><path d="M1523.5,1721.7 H1545.5 M1534.5,1710.7 V1732.7" stroke="#222" stroke-width="2"/><path d="M2853.8,378.2 L2861.1,367.8 L2868.4,378.2 Z M2853.8,1670.8 L2861.1,1681.2 L2868.4,1670.8 Z" fill="#707070" stroke="#707070" stroke-width="2.6" stroke-linejoin="round"/><path d="M2323.2,1714.6 L2312,1721.9 L2323.2,1729.2 Z M2821.8,1714.6 L2833,1721.9 L2821.8,1729.2 Z" fill="#707070" stroke="#707070" stroke-width="2.6" stroke-linejoin="round"/><circle cx="2268" cy="1715.5" r="1.9" fill="#333"/><circle cx="2268" cy="1723.3" r="1.9" fill="#333"/><circle cx="2268" cy="1731" r="1.9" fill="#333"/><g fill="none" stroke="#222" stroke-width="1.9"><rect x="2311" y="1765" width="24.5" height="23.5"/><path d="M2311,1773 H2335.5 M2311,1781 H2335.5 M2319.2,1765 V1788.5 M2327.4,1765 V1788.5"/><rect x="2391" y="1765.5" width="26.5" height="24"/><rect x="2397" y="1771" width="14.5" height="13"/><path d="M2400,1775.5 H2408.5 M2400,1779.5 H2408.5"/><path d="M2471,1765.5 H2497.5 V1789.5 H2471 Z M2480.5,1765.5 V1778 H2471 M2480.5,1778 H2489.5 V1765.5"/></g><path d="M2536.5,1778 H2551 M2772.5,1778 H2787 M2779.7,1770.7 V1785.3" stroke="#444" stroke-width="1.6"/><path d="M2563,1778 H2761" stroke="#555" stroke-width="1.6"/><rect x="2658" y="1767" width="8" height="22" fill="#555"/><g fill="none" stroke="#222" stroke-width="1.8" stroke-linecap="round" stroke-linejoin="round"><circle cx="130.2" cy="1768.4" r="2.9"/><path d="M127.3,1776.3 C124,1775.5 121,1773.8 119.3,1772.2 C118.5,1770.8 119.8,1769.4 121.2,1770.2 C123.5,1771.8 126.5,1773 130.2,1773 C133.9,1773 137,1771.8 139.3,1770.2 C140.7,1769.4 142,1770.8 141.2,1772.2 C139.5,1773.8 136.5,1775.5 133.3,1776.3"/><path d="M127.3,1776.3 L126.6,1781.5 L122.6,1789.3 C122,1790.8 124,1791.9 125,1790.6 L129.2,1783.6 L130.3,1783.4 L131.4,1785.2 M133.3,1776.3 L133.6,1779.8"/><path d="M133.6,1780.4 L145.2,1791.5 M145.2,1780.4 L133.6,1791.5"/></g></svg>
<div class="t" style="left:235.00px;top:1711.00px;font-size:28.00px;color:#fff;transform:scaleX(0.9483);">Sales Dashboard</div>
<div class="t" style="left:497.00px;top:1711.00px;font-size:28.00px;color:#fff;transform:scaleX(0.9727);">Products Dashboard</div>
<div class="t" style="left:803.00px;top:1711.00px;font-size:28.00px;color:#fff;transform:scaleX(0.9763);">Customers Dashboard</div>
<div class="t" style="left:1131.70px;top:1704.00px;font-size:29.00px;color:#1a1a1a;transform:scaleX(0.9561);text-shadow:0 0 1px rgba(0,0,0,.5);">Employees Dashboard</div>
<div class="t" style="left:23.00px;top:1769.00px;font-size:20.70px;color:#333;transform:scaleX(0.9158);">Ready</div>
<div class="t" style="left:153.60px;top:1769.00px;font-size:21.30px;color:#222;font-weight:700;transform:scaleX(0.9402);">Accessibility: Investigate</div>
<div class="t" style="left:2814.00px;top:1769.00px;font-size:21.00px;color:#333;transform:scaleX(0.8937);">100%</div>
<div class="t" style="left:2303.70px;top:1630.00px;font-size:38.70px;color:rgba(110,110,110,.5);transform:scaleX(1.0271);">Activate Windows</div>
<div class="t" style="left:2303.70px;top:1680.00px;font-size:30.50px;color:rgba(110,110,110,.5);transform:scaleX(0.9430);">Go to Settings to activate Windows.</div>
<div class="t" dir="rtl" lang="ar" style="left:1262px;top:1684px;font-size:95px;font-weight:700;font-family:'DejaVu Sans',sans-serif;color:rgb(140,140,148);opacity:.26;line-height:1;letter-spacing:0">خمسات</div>
</body></html>
